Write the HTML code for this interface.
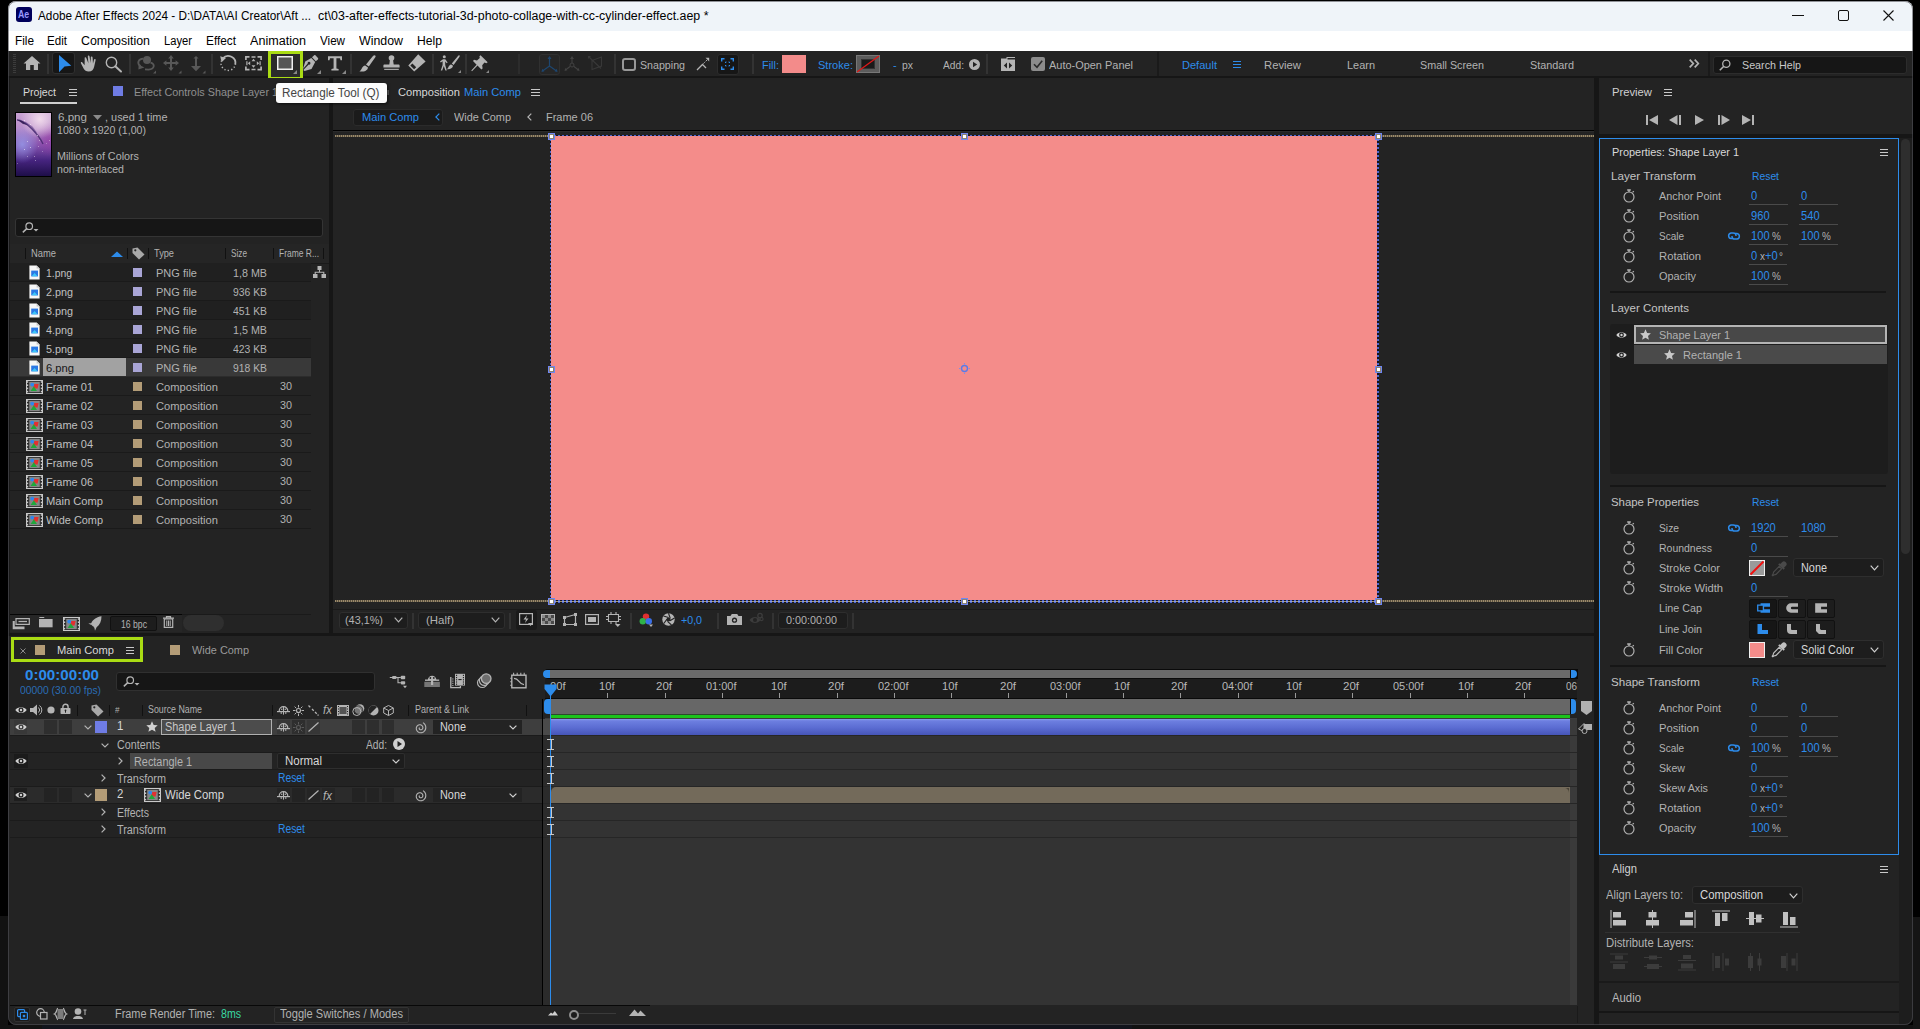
<!DOCTYPE html>
<html><head><meta charset="utf-8"><title>Adobe After Effects 2024</title>
<style>
html,body{margin:0;padding:0;background:#000;}
body{width:1920px;height:1029px;position:relative;overflow:hidden;font-family:"Liberation Sans",sans-serif;}
.a{position:absolute;box-sizing:border-box;}
svg.a{overflow:visible;}
.t{position:absolute;white-space:nowrap;transform-origin:0 50%;}
</style></head><body>
<div class="a" style="left:8px;top:1px;width:1905px;height:1024px;background:#232323;border-radius:8px;"></div>
<div class="a" style="left:8px;top:1px;width:1905px;height:30px;background:#eff4f9;border-radius:8px 8px 0 0;"></div>
<div class="a" style="left:16px;top:7px;width:16px;height:15px;background:#00005b;border-radius:3px;"></div>
<div class="t" style="left:18px;top:10px;font-size:10px;line-height:10px;color:#9999ff;font-weight:bold;transform:scaleX(0.8752);">Ae</div>
<div class="t" style="left:38px;top:10px;font-size:12.5px;line-height:12.5px;color:#000;transform:scaleX(0.9423);">Adobe After Effects 2024 - D:\DATA\AI Creator\Aft ...</div>
<div class="t" style="left:317.5px;top:10px;font-size:12.5px;line-height:12.5px;color:#000;transform:scaleX(0.9925);">ct\03-after-effects-tutorial-3d-photo-collage-with-cc-cylinder-effect.aep *</div>
<div class="a" style="left:1792px;top:15px;width:12px;height:1px;background:#111;"></div>
<div class="a" style="left:1838px;top:10px;width:11px;height:11px;border:1px solid #111;border-radius:2px;"></div>
<svg class="a" style="left:1883px;top:10px;" width="11" height="11" viewBox="0 0 11 11"><path d="M0.5 0.5L10.5 10.5M10.5 0.5L0.5 10.5" stroke="#111" stroke-width="1.1" fill="none"/></svg>
<div class="a" style="left:8px;top:31px;width:1905px;height:20px;background:#ffffff;"></div>
<div class="t" style="left:15px;top:35px;font-size:12px;line-height:12px;color:#000;transform:scaleX(0.9822);">File</div>
<div class="t" style="left:47px;top:35px;font-size:12px;line-height:12px;color:#000;transform:scaleX(0.9668);">Edit</div>
<div class="t" style="left:81px;top:35px;font-size:12px;line-height:12px;color:#000;transform:scaleX(1.0344);">Composition</div>
<div class="t" style="left:164px;top:35px;font-size:12px;line-height:12px;color:#000;transform:scaleX(0.9324);">Layer</div>
<div class="t" style="left:206px;top:35px;font-size:12px;line-height:12px;color:#000;transform:scaleX(0.9846);">Effect</div>
<div class="t" style="left:250px;top:35px;font-size:12px;line-height:12px;color:#000;transform:scaleX(1.0492);">Animation</div>
<div class="t" style="left:320px;top:35px;font-size:12px;line-height:12px;color:#000;transform:scaleX(0.9691);">View</div>
<div class="t" style="left:359px;top:35px;font-size:12px;line-height:12px;color:#000;transform:scaleX(1.0307);">Window</div>
<div class="t" style="left:417px;top:35px;font-size:12px;line-height:12px;color:#000;transform:scaleX(1.0127);">Help</div>
<div class="a" style="left:8px;top:51px;width:1905px;height:25px;background:#232323;"></div>
<div class="a" style="left:8px;top:76px;width:1905px;height:2px;background:#161616;"></div>
<div class="a" style="left:13px;top:54px;width:3px;height:1px;background:#3c3c3c;"></div>
<div class="a" style="left:13px;top:56px;width:3px;height:1px;background:#3c3c3c;"></div>
<div class="a" style="left:13px;top:58px;width:3px;height:1px;background:#3c3c3c;"></div>
<div class="a" style="left:13px;top:60px;width:3px;height:1px;background:#3c3c3c;"></div>
<div class="a" style="left:13px;top:62px;width:3px;height:1px;background:#3c3c3c;"></div>
<div class="a" style="left:13px;top:64px;width:3px;height:1px;background:#3c3c3c;"></div>
<div class="a" style="left:13px;top:66px;width:3px;height:1px;background:#3c3c3c;"></div>
<div class="a" style="left:13px;top:68px;width:3px;height:1px;background:#3c3c3c;"></div>
<div class="a" style="left:13px;top:70px;width:3px;height:1px;background:#3c3c3c;"></div>
<div class="a" style="left:13px;top:72px;width:3px;height:1px;background:#3c3c3c;"></div>
<svg class="a" style="left:23px;top:55px;" width="18" height="16" viewBox="0 0 18 16"><path d="M9 1L0.5 8.5H3V15H7.2V10H10.8V15H15V8.5H17.5Z" fill="#b4b4b4"/></svg>
<div class="a" style="left:47px;top:54px;width:2px;height:20px;background:#333;"></div>
<div class="a" style="left:52px;top:52px;width:23px;height:22px;background:#161616;border:1px solid #303030;border-radius:3px;"></div>
<svg class="a" style="left:59px;top:55px;" width="12" height="18" viewBox="0 0 12 18"><path d="M0 0L12.3 10.8L5.5 11.5L0 17.3Z" fill="#2d8ceb"/></svg>
<svg class="a" style="left:80px;top:55px;" width="18" height="17" viewBox="0 0 18 17"><path d="M4.6 10.2L2.4 7.4C1.6 6.4 0.4 7.2 0.9 8.3L3.6 13.6C4.6 15.6 6.2 16.6 8.6 16.6C12 16.6 13.6 14.6 14.2 11.6L15.6 5.2C15.9 3.9 14.3 3.5 14 4.8L13 8.6L12.6 2.4C12.5 1.1 10.8 1.2 10.8 2.5L10.7 8L9.5 1.3C9.3 0 7.6 0.3 7.8 1.6L8.4 8.2L6.3 2.9C5.8 1.7 4.3 2.3 4.7 3.5Z" fill="#b4b4b4"/></svg>
<svg class="a" style="left:105px;top:56px;" width="18" height="17" viewBox="0 0 18 17"><circle cx="6.5" cy="6.5" r="5.2" fill="none" stroke="#b4b4b4" stroke-width="1.4"/><path d="M10.3 10.3L16 15.5" stroke="#b4b4b4" stroke-width="2" stroke-linecap="round"/></svg>
<div class="a" style="left:129px;top:54px;width:2px;height:20px;background:#333;"></div>
<svg class="a" style="left:136px;top:55px;" width="21" height="19" viewBox="0 0 21 19"><circle cx="11" cy="5" r="4" fill="#585858"/><path d="M7.3 3.6C2 4 0.6 8.5 4.6 11.2" fill="none" stroke="#585858" stroke-width="1.8"/><path d="M2.6 9.6L8.4 12.6L2.4 14.6Z" fill="#585858"/><path d="M14.6 7.6C19.2 9 19 14 12.4 14.6L9 14.4" fill="none" stroke="#585858" stroke-width="1.8"/><path d="M20 18.5H17L20 15.5Z" fill="#585858"/></svg>
<svg class="a" style="left:163px;top:55px;" width="19" height="19" viewBox="0 0 19 19"><path d="M7 3H9V7H13V9H9V13H7V9H3V7H7Z" fill="#585858"/><path d="M8 0L10.8 3.4H5.2ZM8 16L10.8 12.600H5.2ZM0 8L3.4 5.2V10.8ZM16 8L12.600 5.200V10.800Z" fill="#585858"/><path d="M18.500 18.500H15.500L18.500 15.500Z" fill="#585858"/></svg>
<svg class="a" style="left:190px;top:56px;" width="16" height="18" viewBox="0 0 16 18"><path d="M6 0L8.6 2.600H7V10H11L6 15.300L1 10H5V2.600H3.400Z" fill="#585858"/><path d="M15.500 17.500H12.500L15.500 14.500Z" fill="#585858"/></svg>
<div class="a" style="left:211px;top:54px;width:2px;height:20px;background:#333;"></div>
<svg class="a" style="left:219px;top:55px;" width="19" height="17" viewBox="0 0 19 17"><path d="M3.85 3.38A7.2 7.2 0 0 1 16.24 9.70" fill="none" stroke="#b4b4b4" stroke-width="1.8"/><path d="M1.2 1.3L7 2.900L2.600 7.200Z" fill="#b4b4b4"/><path d="M15.56 11.58A7.2 7.2 0 0 1 2.43 5.74" fill="none" stroke="#b4b4b4" stroke-width="1.4" stroke-dasharray="1.3 2.1"/></svg>
<svg class="a" style="left:245px;top:56px;" width="17" height="15" viewBox="0 0 17 15"><path d="M0.9 4V0.900H4.500M12.500 0.900H16.100V4M16.100 10.500V13.600H12.500M4.500 13.600H0.900V10.500" fill="none" stroke="#b4b4b4" stroke-width="1.700"/><path d="M6.500 0.900H10.500M6.500 13.600H10.500" stroke="#b4b4b4" stroke-width="1.500"/><path d="M8.500 2.800L10.500 5.200H6.500ZM8.500 11.700L10.500 9.300H6.500ZM1.300 5.200H2.500V9.300H1.300ZM2.800 7.250L5.200 5.200V9.300ZM15.700 5.200H14.500V9.300H15.700ZM14.200 7.250L11.800 5.200V9.300Z" fill="#b4b4b4"/></svg>
<div class="a" style="left:271px;top:54px;width:29px;height:23px;background:#2b2b2b;"></div>
<div class="a" style="left:268px;top:51px;width:35px;height:29px;border:3px solid #aadc14;"></div>
<svg class="a" style="left:277px;top:56px;" width="16" height="14" viewBox="0 0 16 14"><rect x="0.75" y="0.75" width="14.5" height="12.5" fill="#555" stroke="#f0f0f0" stroke-width="1.5"/></svg>
<svg class="a" style="left:293px;top:70px;" width="4" height="4" viewBox="0 0 4 4"><path d="M4 0V4H0Z" fill="#888"/></svg>
<svg class="a" style="left:303px;top:55px;" width="16" height="17" viewBox="0 0 16 17"><path d="M9 2.2L11.2 0.3C11.7 -0.1 12.2 0 12.6 0.4L15 3C15.4 3.5 15.3 4 14.9 4.4L12.8 6.2Z M8.3 3L12.2 7L8.5 14L1.5 16L0.3 15L5.7 9.6A1.4 1.4 0 1 0 4.7 8.6L0 14L2.2 6.5Z" fill="#b4b4b4"/></svg>
<svg class="a" style="left:317px;top:70px;" width="4" height="4" viewBox="0 0 4 4"><path d="M4 0V4H0Z" fill="#888"/></svg>
<svg class="a" style="left:328px;top:56px;" width="14" height="15" viewBox="0 0 14 15"><path d="M0 0.300H14V4.200H12.500L12 2.300H8.400V12.500L10.600 13V14.600H3.400V13L5.600 12.500V2.300H2L1.500 4.200H0Z" fill="#b4b4b4"/></svg>
<svg class="a" style="left:342px;top:70px;" width="4" height="4" viewBox="0 0 4 4"><path d="M4 0V4H0Z" fill="#888"/></svg>
<div class="a" style="left:350px;top:54px;width:2px;height:20px;background:#333;"></div>
<svg class="a" style="left:359px;top:55px;" width="17" height="17" viewBox="0 0 17 17"><path d="M15.500 0.200C16.700 0.200 16.900 1.400 16.300 2.300L9.800 11.600L7 9.600L14 0.900C14.400 0.400 14.900 0.200 15.500 0.200Z M6.200 10.400L9 12.400C8.600 15.800 4.500 17 0.300 16.500C3 15 2.600 11 6.200 10.400Z" fill="#b4b4b4"/></svg>
<svg class="a" style="left:383px;top:55px;" width="17" height="16" viewBox="0 0 17 16"><circle cx="8.500" cy="3" r="2.800" fill="#b4b4b4"/><path d="M7 4.500L6.300 9.400H1.500C0.800 9.400 0.400 9.900 0.400 10.500V12.400H16.600V10.500C16.600 9.900 16.200 9.400 15.500 9.400H10.700L10 4.500Z" fill="#b4b4b4"/><rect x="1.200" y="13.800" width="14.600" height="1.100" fill="#b4b4b4"/></svg>
<svg class="a" style="left:408px;top:54px;" width="18" height="18" viewBox="0 0 18 18"><path d="M10.200 0.200L17.600 7.400L6.200 17.400L0.300 11.600ZM2.300 11.500L6.100 15.200L8.200 13.300L4.400 9.600Z" fill="#b4b4b4" fill-rule="evenodd"/></svg>
<div class="a" style="left:432px;top:54px;width:2px;height:20px;background:#333;"></div>
<svg class="a" style="left:439px;top:55px;" width="22" height="18" viewBox="0 0 22 18"><circle cx="5.3" cy="1.8" r="1.5" fill="#b4b4b4"/><path d="M1 6.5L4 4.2H6.3L8.6 7.5L7.8 8.3L6.2 6.6V10L7.8 15.5H6.4L4.8 11L3.2 15.5H1.8L3.6 10V6.2L1.8 7.6Z" fill="#b4b4b4"/><path d="M20.3 0.3C20.9 0.7 20.8 1.4 20.4 2L14.6 10L12.8 8.6L19 0.9C19.4 0.4 19.9 0 20.3 0.3ZM12.2 9.4L14 10.8C13.8 13.5 10.8 14.6 7.8 14.2C9.7 13 9.2 10.1 12.2 9.4Z" fill="#b4b4b4"/><path d="M22 18L19 18L22 15Z" fill="#888"/></svg>
<div class="a" style="left:465px;top:54px;width:2px;height:20px;background:#333;"></div>
<svg class="a" style="left:471px;top:55px;" width="18" height="18" viewBox="0 0 18 18"><path d="M9.5 0.3L16.7 7.2L15.3 8.2L13.5 7.6L11.2 10.2L11.6 13.4L10.4 14.4L6.5 10.6L1 16.2L0.3 15.6L5.6 9.8L2 6L3 4.8L6 5.4L8.8 3L8.4 1.2Z" fill="#b4b4b4"/><path d="M18 18L15 18L18 15Z" fill="#888"/></svg>
<div class="a" style="left:518px;top:54px;width:2px;height:20px;background:#2c2c2c;"></div>
<div class="a" style="left:539px;top:54px;width:21px;height:21px;background:#262626;border:1px solid #303030;border-radius:3px;"></div>
<svg class="a" style="left:541px;top:56px;" width="17" height="17" viewBox="0 0 17 17"><path d="M8.5 1V10M8.5 10L1.5 15M8.5 10L15.5 15" fill="none" stroke="#1d4670" stroke-width="1.2"/><path d="M8.5 0L10.5 3H6.5ZM0.5 16L1.2 12.8L3.4 15.2ZM16.5 16L15.8 12.8L13.6 15.2Z" fill="#1d4670"/></svg>
<svg class="a" style="left:564px;top:56px;" width="16" height="16" viewBox="0 0 16 16"><path d="M8 1V7M6 10.5L1.5 14M10 10.5L14.5 14" fill="none" stroke="#424242" stroke-width="1.1"/><circle cx="8" cy="9" r="2" fill="none" stroke="#424242"/><path d="M8 0L10 3H6ZM0.5 15L1.2 12L3.4 14.2ZM15.5 15L14.8 12L12.6 14.2Z" fill="#424242"/></svg>
<svg class="a" style="left:587px;top:55px;" width="16" height="16" viewBox="0 0 16 16"><path d="M5 5.5L14.5 2V11L5 14.5ZM2 2L14 13.5" fill="none" stroke="#383838" stroke-width="1.1"/><path d="M1 1H4L1 4Z" fill="#383838"/></svg>
<div class="a" style="left:614px;top:54px;width:2px;height:20px;background:#333;"></div>
<div class="a" style="left:622px;top:58px;width:14px;height:13px;border:2px solid #989898;border-radius:3px;"></div>
<div class="t" style="left:640px;top:60px;font-size:11.5px;line-height:11.5px;color:#b2b2b2;transform:scaleX(0.9257);">Snapping</div>
<svg class="a" style="left:696px;top:57px;" width="14" height="14" viewBox="0 0 14 14"><path d="M1 13L6.5 7.5L10 11" fill="none" stroke="#b4b4b4" stroke-width="1.3"/><path d="M6.5 7.5L11 3" stroke="#b4b4b4" stroke-width="1" stroke-dasharray="1.5 1" fill="none"/><path d="M9.5 0.8H13.2V4.5Z" fill="#b4b4b4"/></svg>
<div class="a" style="left:717px;top:54px;width:22px;height:21px;background:#161616;border:1px solid #2c2c2c;border-radius:3px;"></div>
<svg class="a" style="left:721px;top:58px;" width="13" height="12" viewBox="0 0 13 12"><path d="M0.7 3.5V0.7H3.5M9.5 0.7H12.3V3.5M12.3 8.5V11.3H9.5M3.5 11.3H0.7V8.5" fill="none" stroke="#2d8ceb" stroke-width="1.4"/><path d="M4.5 5V4H5.5M7.5 4H8.5V5M8.5 7V8H7.5M5.5 8H4.5V7" fill="none" stroke="#2d8ceb" stroke-width="1"/></svg>
<div class="a" style="left:752px;top:54px;width:2px;height:20px;background:#333;"></div>
<div class="t" style="left:762px;top:60px;font-size:11.5px;line-height:11.5px;color:#2d8ceb;transform:scaleX(0.9502);">Fill:</div>
<div class="a" style="left:782px;top:55px;width:24px;height:18px;background:#f38b8a;"></div>
<div class="t" style="left:818px;top:60px;font-size:11.5px;line-height:11.5px;color:#2d8ceb;transform:scaleX(0.9605);">Stroke:</div>
<div class="a" style="left:856px;top:55px;width:24px;height:18px;background:#5c5c5c;border:1px solid #777;"></div>
<div class="a" style="left:861px;top:59px;width:14px;height:10px;background:#1a1a1a;border:1px solid #333;"></div>
<svg class="a" style="left:856px;top:55px;" width="24" height="18" viewBox="0 0 24 18"><path d="M1 17L23 1" stroke="#e01818" stroke-width="1.3"/></svg>
<div class="t" style="left:893px;top:60px;font-size:11.5px;line-height:11.5px;color:#2d8ceb;transform:scaleX(0.95);">-</div>
<div class="t" style="left:902px;top:60px;font-size:11.5px;line-height:11.5px;color:#b2b2b2;transform:scaleX(0.9049);">px</div>
<div class="t" style="left:943px;top:60px;font-size:11.5px;line-height:11.5px;color:#b2b2b2;transform:scaleX(0.8871);">Add:</div>
<svg class="a" style="left:969px;top:59px;" width="11" height="11" viewBox="0 0 11 11"><circle cx="5.5" cy="5.5" r="5.5" fill="#b4b4b4"/><path d="M4 2.8L8.2 5.5L4 8.2Z" fill="#232323"/></svg>
<div class="a" style="left:986px;top:54px;width:2px;height:20px;background:#333;"></div>
<svg class="a" style="left:1001px;top:57px;" width="14" height="14" viewBox="0 0 14 14"><path d="M0 1.5H5.5V0H14V1H6.5V2.5H14V14H0Z" fill="#b4b4b4"/><path d="M6 5.5V11.5L2.8 8.5ZM8 5.5V11.5L11.2 8.5Z" fill="#232323"/></svg>
<div class="a" style="left:1031px;top:57px;width:14px;height:14px;background:#8c8c8c;border-radius:2px;"></div>
<svg class="a" style="left:1031px;top:57px;" width="14" height="14" viewBox="0 0 14 14"><path d="M3 7.2L6 10.2L11.2 3.8" fill="none" stroke="#2a2a2a" stroke-width="1.6"/></svg>
<div class="t" style="left:1049px;top:60px;font-size:11.5px;line-height:11.5px;color:#b2b2b2;transform:scaleX(0.9520);">Auto-Open Panel</div>
<div class="a" style="left:1157px;top:52px;width:2px;height:24px;background:#1a1a1a;"></div>
<div class="t" style="left:1182px;top:60px;font-size:11.5px;line-height:11.5px;color:#2d8ceb;transform:scaleX(0.9605);">Default</div>
<div class="a" style="left:1233px;top:61px;width:8px;height:1.3px;background:#2d8ceb;"></div>
<div class="a" style="left:1233px;top:64px;width:8px;height:1.3px;background:#2d8ceb;"></div>
<div class="a" style="left:1233px;top:67px;width:8px;height:1.3px;background:#2d8ceb;"></div>
<div class="t" style="left:1264px;top:60px;font-size:11.5px;line-height:11.5px;color:#b2b2b2;transform:scaleX(0.9809);">Review</div>
<div class="t" style="left:1347px;top:60px;font-size:11.5px;line-height:11.5px;color:#b2b2b2;transform:scaleX(0.9517);">Learn</div>
<div class="t" style="left:1420px;top:60px;font-size:11.5px;line-height:11.5px;color:#b2b2b2;transform:scaleX(0.9358);">Small Screen</div>
<div class="t" style="left:1530px;top:60px;font-size:11.5px;line-height:11.5px;color:#b2b2b2;transform:scaleX(0.9424);">Standard</div>
<svg class="a" style="left:1689px;top:59px;" width="10" height="9" viewBox="0 0 10 9"><path d="M0.7 0.7L4.3 4.5L0.7 8.3M5.7 0.7L9.3 4.5L5.7 8.3" fill="none" stroke="#b4b4b4" stroke-width="1.7"/></svg>
<div class="a" style="left:1708px;top:52px;width:2px;height:24px;background:#1a1a1a;"></div>
<div class="a" style="left:1713px;top:56px;width:194px;height:18px;background:#161616;border-radius:3px;border:1px solid #2c2c2c;"></div>
<svg class="a" style="left:1719px;top:59px;" width="12" height="12" viewBox="0 0 12 12"><circle cx="7.3" cy="4.7" r="3.6" fill="none" stroke="#b4b4b4" stroke-width="1.3"/><path d="M4.8 7.2L0.8 11.2" stroke="#b4b4b4" stroke-width="1.6"/></svg>
<div class="t" style="left:1742px;top:60px;font-size:11.5px;line-height:11.5px;color:#c8c8c8;transform:scaleX(0.9321);">Search Help</div>
<div class="a" style="left:8px;top:78px;width:321px;height:559px;background:#232323;"></div>
<div class="a" style="left:329px;top:78px;width:4px;height:559px;background:#161616;"></div>
<div class="a" style="left:8px;top:78px;width:2px;height:559px;background:#1a1a1a;"></div>
<div class="t" style="left:23px;top:87px;font-size:11.5px;line-height:11.5px;color:#d8d8d8;transform:scaleX(0.9219);">Project</div>
<div class="a" style="left:20px;top:102px;width:57px;height:2px;background:#cfcfcf;"></div>
<div class="a" style="left:69px;top:89px;width:8px;height:1px;background:#c8c8c8;"></div>
<div class="a" style="left:69px;top:92px;width:8px;height:1px;background:#c8c8c8;"></div>
<div class="a" style="left:69px;top:95px;width:8px;height:1px;background:#c8c8c8;"></div>
<div class="a" style="left:113px;top:86px;width:10px;height:10px;background:#6f7ce4;"></div>
<div class="t" style="left:134px;top:87px;font-size:11.5px;line-height:11.5px;color:#8f8f8f;transform:scaleX(0.9398);">Effect Controls Shape Layer 1</div>
<div class="a" style="left:15px;top:112px;width:37px;height:65px;background:#000;"></div>
<div class="a" style="left:16px;top:113px;width:35px;height:63px;background:radial-gradient(ellipse 55% 30% at 68% 10%,rgba(245,225,238,.9),rgba(245,225,238,0) 100%),radial-gradient(ellipse 45% 30% at 18% 50%,rgba(150,155,235,.8),rgba(150,155,235,0) 100%),radial-gradient(ellipse 40% 28% at 95% 42%,rgba(150,50,160,.55),rgba(150,50,160,0) 100%),linear-gradient(180deg,#c9a3d3 0%,#b78bc9 25%,#8452ad 52%,#46247f 75%,#1e0e48 100%);"></div>
<svg class="a" style="left:16px;top:113px;" width="35" height="63" viewBox="0 0 35 63"><path d="M1 7C6 7 12 12 16 16C20 20 24 24 27 31" stroke="#3b2166" stroke-width="1.4" fill="none" opacity=".75"/><path d="M1 6.500L6 8L12 12L7 11Z" fill="#2c1650" opacity=".85"/><path d="M9 9.500L16 14.500L20 20" stroke="#4a2a78" stroke-width="2" fill="none" opacity=".5"/><rect x="8" y="7" width="1" height="1" fill="#fff" opacity="0.54"/><rect x="14" y="11" width="1" height="1" fill="#fff" opacity="0.48"/><rect x="21" y="22" width="1" height="1" fill="#fff" opacity="0.54"/><rect x="23" y="27" width="1" height="1" fill="#fff" opacity="0.42"/><rect x="11" y="28" width="1" height="1" fill="#fff" opacity="0.48"/><rect x="14" y="34" width="1" height="1" fill="#fff" opacity="0.54"/><rect x="8" y="36" width="1" height="1" fill="#fff" opacity="0.54"/><rect x="22" y="33" width="1" height="1" fill="#fff" opacity="0.36"/><rect x="18" y="43" width="1" height="1" fill="#fff" opacity="0.42"/><rect x="11" y="43" width="1" height="1" fill="#fff" opacity="0.36"/><rect x="19" y="47" width="1" height="1" fill="#fff" opacity="0.42"/><rect x="33" y="27" width="1" height="1" fill="#fff" opacity="0.36"/><rect x="30" y="30" width="1" height="1" fill="#fff" opacity="0.30"/><rect x="1" y="50" width="1" height="1" fill="#fff" opacity="0.30"/><rect x="26" y="38" width="1" height="1" fill="#fff" opacity="0.30"/></svg>
<div class="t" style="left:58px;top:112px;font-size:11.5px;line-height:11.5px;color:#b2b2b2;transform:scaleX(1.0076);">6.png</div>
<svg class="a" style="left:93px;top:115px;" width="9" height="5" viewBox="0 0 9 5"><path d="M0 0H9L4.500 5Z" fill="#8a8a8a"/></svg>
<div class="t" style="left:105px;top:112px;font-size:11.5px;line-height:11.5px;color:#b2b2b2;transform:scaleX(0.9492);">, used 1 time</div>
<div class="t" style="left:57px;top:125px;font-size:11.5px;line-height:11.5px;color:#b2b2b2;transform:scaleX(0.9218);">1080 x 1920 (1,00)</div>
<div class="t" style="left:57px;top:151px;font-size:11.5px;line-height:11.5px;color:#b2b2b2;transform:scaleX(0.9365);">Millions of Colors</div>
<div class="t" style="left:57px;top:164px;font-size:11.5px;line-height:11.5px;color:#b2b2b2;transform:scaleX(0.9192);">non-interlaced</div>
<div class="a" style="left:15px;top:218px;width:308px;height:19px;background:#161616;border-radius:3px;border:1px solid #343434;"></div>
<svg class="a" style="left:22px;top:222px;" width="17" height="11" viewBox="0 0 17 11"><circle cx="7.2" cy="4.2" r="3.3" fill="none" stroke="#b4b4b4" stroke-width="1.2"/><path d="M4.8 6.6L0.8 10.4" stroke="#b4b4b4" stroke-width="1.5"/><path d="M11.5 7H16.5L14 9.6Z" fill="#b4b4b4"/></svg>
<div class="a" style="left:10px;top:244px;width:319px;height:19px;background:#252525;"></div>
<div class="a" style="left:10px;top:263px;width:319px;height:1px;background:#1a1a1a;"></div>
<div class="a" style="left:25px;top:248px;width:1px;height:11px;background:#111;"></div>
<div class="a" style="left:127px;top:248px;width:1px;height:11px;background:#111;"></div>
<div class="a" style="left:148px;top:248px;width:1px;height:11px;background:#111;"></div>
<div class="a" style="left:225px;top:248px;width:1px;height:11px;background:#111;"></div>
<div class="a" style="left:273px;top:248px;width:1px;height:11px;background:#111;"></div>
<div class="a" style="left:323px;top:248px;width:1px;height:11px;background:#111;"></div>
<div class="t" style="left:31px;top:248px;font-size:10.5px;line-height:10.5px;color:#b2b2b2;transform:scaleX(0.8924);">Name</div>
<svg class="a" style="left:111px;top:251px;" width="12" height="6" viewBox="0 0 12 6"><path d="M0 6L6 0.5L12 6Z" fill="#2d8ceb"/></svg>
<svg class="a" style="left:132px;top:247px;" width="13" height="13" viewBox="0 0 13 13"><path d="M0.5 1.5L5.5 0.5L12.5 7.5L7 12.5L0.5 6Z" fill="#a8a8a8"/><circle cx="3.3" cy="3.3" r="1.1" fill="#262626"/></svg>
<div class="t" style="left:154px;top:248px;font-size:10.5px;line-height:10.5px;color:#b2b2b2;transform:scaleX(0.8785);">Type</div>
<div class="t" style="left:231px;top:248px;font-size:10.5px;line-height:10.5px;color:#b2b2b2;transform:scaleX(0.7829);">Size</div>
<div class="t" style="left:279px;top:248px;font-size:10.5px;line-height:10.5px;color:#b2b2b2;transform:scaleX(0.8066);">Frame R...</div>
<div class="a" style="left:10px;top:263px;width:301px;height:18px;background:#202020;"></div>
<div class="a" style="left:10px;top:281px;width:301px;height:1px;background:#1a1a1a;"></div>
<svg class="a" style="left:29px;top:265px;" width="11" height="15" viewBox="0 0 11 15"><path d="M0.400 0.400H7.600L10.600 3.600V14.600H0.400Z" fill="#f6f6f6"/><path d="M7.600 0.400V3.600H10.600Z" fill="#c4c4c4"/><rect x="2.200" y="5.600" width="6.800" height="5.800" fill="#2a78e4"/><path d="M2.600 11.200L5.600 8L8.600 11.200Z" fill="#3cc6f8"/></svg>
<div class="t" style="left:46px;top:268px;font-size:11.5px;line-height:11.5px;color:#c0c0c0;transform:scaleX(0.9034);">1.png</div>
<div class="a" style="left:133px;top:268px;width:9px;height:9px;background:#a9a5d6;"></div>
<div class="t" style="left:156px;top:268px;font-size:11.5px;line-height:11.5px;color:#b2b2b2;transform:scaleX(0.9573);">PNG file</div>
<div class="t" style="left:233px;top:268px;font-size:11.5px;line-height:11.5px;color:#b2b2b2;transform:scaleX(0.9331);">1,8 MB</div>
<div class="a" style="left:10px;top:282px;width:301px;height:18px;background:#232323;"></div>
<div class="a" style="left:10px;top:300px;width:301px;height:1px;background:#1a1a1a;"></div>
<svg class="a" style="left:29px;top:284px;" width="11" height="15" viewBox="0 0 11 15"><path d="M0.400 0.400H7.600L10.600 3.600V14.600H0.400Z" fill="#f6f6f6"/><path d="M7.600 0.400V3.600H10.600Z" fill="#c4c4c4"/><rect x="2.200" y="5.600" width="6.800" height="5.800" fill="#2a78e4"/><path d="M2.600 11.200L5.600 8L8.600 11.200Z" fill="#3cc6f8"/></svg>
<div class="t" style="left:46px;top:287px;font-size:11.5px;line-height:11.5px;color:#c0c0c0;transform:scaleX(0.9381);">2.png</div>
<div class="a" style="left:133px;top:287px;width:9px;height:9px;background:#a9a5d6;"></div>
<div class="t" style="left:156px;top:287px;font-size:11.5px;line-height:11.5px;color:#b2b2b2;transform:scaleX(0.9573);">PNG file</div>
<div class="t" style="left:233px;top:287px;font-size:11.5px;line-height:11.5px;color:#b2b2b2;transform:scaleX(0.9010);">936 KB</div>
<div class="a" style="left:10px;top:301px;width:301px;height:18px;background:#202020;"></div>
<div class="a" style="left:10px;top:319px;width:301px;height:1px;background:#1a1a1a;"></div>
<svg class="a" style="left:29px;top:303px;" width="11" height="15" viewBox="0 0 11 15"><path d="M0.400 0.400H7.600L10.600 3.600V14.600H0.400Z" fill="#f6f6f6"/><path d="M7.600 0.400V3.600H10.600Z" fill="#c4c4c4"/><rect x="2.200" y="5.600" width="6.800" height="5.800" fill="#2a78e4"/><path d="M2.600 11.200L5.600 8L8.600 11.200Z" fill="#3cc6f8"/></svg>
<div class="t" style="left:46px;top:306px;font-size:11.5px;line-height:11.5px;color:#c0c0c0;transform:scaleX(0.9381);">3.png</div>
<div class="a" style="left:133px;top:306px;width:9px;height:9px;background:#a9a5d6;"></div>
<div class="t" style="left:156px;top:306px;font-size:11.5px;line-height:11.5px;color:#b2b2b2;transform:scaleX(0.9573);">PNG file</div>
<div class="t" style="left:233px;top:306px;font-size:11.5px;line-height:11.5px;color:#b2b2b2;transform:scaleX(0.9010);">451 KB</div>
<div class="a" style="left:10px;top:320px;width:301px;height:18px;background:#232323;"></div>
<div class="a" style="left:10px;top:338px;width:301px;height:1px;background:#1a1a1a;"></div>
<svg class="a" style="left:29px;top:322px;" width="11" height="15" viewBox="0 0 11 15"><path d="M0.400 0.400H7.600L10.600 3.600V14.600H0.400Z" fill="#f6f6f6"/><path d="M7.600 0.400V3.600H10.600Z" fill="#c4c4c4"/><rect x="2.200" y="5.600" width="6.800" height="5.800" fill="#2a78e4"/><path d="M2.600 11.200L5.600 8L8.600 11.200Z" fill="#3cc6f8"/></svg>
<div class="t" style="left:46px;top:325px;font-size:11.5px;line-height:11.5px;color:#c0c0c0;transform:scaleX(0.9381);">4.png</div>
<div class="a" style="left:133px;top:325px;width:9px;height:9px;background:#a9a5d6;"></div>
<div class="t" style="left:156px;top:325px;font-size:11.5px;line-height:11.5px;color:#b2b2b2;transform:scaleX(0.9573);">PNG file</div>
<div class="t" style="left:233px;top:325px;font-size:11.5px;line-height:11.5px;color:#b2b2b2;transform:scaleX(0.9331);">1,5 MB</div>
<div class="a" style="left:10px;top:339px;width:301px;height:18px;background:#202020;"></div>
<div class="a" style="left:10px;top:357px;width:301px;height:1px;background:#1a1a1a;"></div>
<svg class="a" style="left:29px;top:341px;" width="11" height="15" viewBox="0 0 11 15"><path d="M0.400 0.400H7.600L10.600 3.600V14.600H0.400Z" fill="#f6f6f6"/><path d="M7.600 0.400V3.600H10.600Z" fill="#c4c4c4"/><rect x="2.200" y="5.600" width="6.800" height="5.800" fill="#2a78e4"/><path d="M2.600 11.200L5.600 8L8.600 11.200Z" fill="#3cc6f8"/></svg>
<div class="t" style="left:46px;top:344px;font-size:11.5px;line-height:11.5px;color:#c0c0c0;transform:scaleX(0.9381);">5.png</div>
<div class="a" style="left:133px;top:344px;width:9px;height:9px;background:#a9a5d6;"></div>
<div class="t" style="left:156px;top:344px;font-size:11.5px;line-height:11.5px;color:#b2b2b2;transform:scaleX(0.9573);">PNG file</div>
<div class="t" style="left:233px;top:344px;font-size:11.5px;line-height:11.5px;color:#b2b2b2;transform:scaleX(0.9010);">423 KB</div>
<div class="a" style="left:10px;top:358px;width:301px;height:18px;background:#393939;"></div>
<div class="a" style="left:10px;top:376px;width:301px;height:1px;background:#2c2c2c;"></div>
<svg class="a" style="left:29px;top:360px;" width="11" height="15" viewBox="0 0 11 15"><path d="M0.400 0.400H7.600L10.600 3.600V14.600H0.400Z" fill="#f6f6f6"/><path d="M7.600 0.400V3.600H10.600Z" fill="#c4c4c4"/><rect x="2.200" y="5.600" width="6.800" height="5.800" fill="#2a78e4"/><path d="M2.600 11.200L5.600 8L8.600 11.200Z" fill="#3cc6f8"/></svg>
<div class="a" style="left:43px;top:358px;width:83px;height:18px;background:#a2a2a2;"></div>
<div class="t" style="left:46px;top:363px;font-size:11.5px;line-height:11.5px;color:#161616;transform:scaleX(0.9729);">6.png</div>
<div class="a" style="left:133px;top:363px;width:9px;height:9px;background:#a9a5d6;"></div>
<div class="t" style="left:156px;top:363px;font-size:11.5px;line-height:11.5px;color:#b2b2b2;transform:scaleX(0.9573);">PNG file</div>
<div class="t" style="left:233px;top:363px;font-size:11.5px;line-height:11.5px;color:#b2b2b2;transform:scaleX(0.9010);">918 KB</div>
<div class="a" style="left:10px;top:377px;width:301px;height:18px;background:#232323;"></div>
<div class="a" style="left:10px;top:395px;width:301px;height:1px;background:#1a1a1a;"></div>
<svg class="a" style="left:26px;top:380px;" width="17" height="14" viewBox="0 0 17 14"><rect x="0.5" y="0.5" width="16" height="13" fill="#2a2a2a" stroke="#c8c8c8" stroke-width="1"/><rect x="0" y="1.2" width="2.2" height="1.6" fill="#c8c8c8"/><rect x="14.8" y="1.2" width="2.2" height="1.6" fill="#c8c8c8"/><rect x="0" y="4.4" width="2.2" height="1.6" fill="#c8c8c8"/><rect x="14.8" y="4.4" width="2.2" height="1.6" fill="#c8c8c8"/><rect x="0" y="7.6000000000000005" width="2.2" height="1.6" fill="#c8c8c8"/><rect x="14.8" y="7.6000000000000005" width="2.2" height="1.6" fill="#c8c8c8"/><rect x="0" y="10.8" width="2.2" height="1.6" fill="#c8c8c8"/><rect x="14.8" y="10.8" width="2.2" height="1.6" fill="#c8c8c8"/><rect x="3.2" y="1.8" width="10.6" height="10.4" fill="#868686"/><path d="M8.2 4H12.6L11.6 8.4H7.2Z" fill="#e23030"/><path d="M4.6 11L7.8 6.2L11 11Z" fill="#1fa83a"/><circle cx="6.2" cy="4.6" r="1.9" fill="#2f86ee"/></svg>
<div class="t" style="left:46px;top:382px;font-size:11.5px;line-height:11.5px;color:#c0c0c0;transform:scaleX(0.9549);">Frame 01</div>
<div class="a" style="left:133px;top:382px;width:9px;height:9px;background:#b39c77;"></div>
<div class="t" style="left:156px;top:382px;font-size:11.5px;line-height:11.5px;color:#b2b2b2;transform:scaleX(0.9699);">Composition</div>
<div class="t" style="left:280px;top:381px;font-size:11.5px;line-height:11.5px;color:#b2b2b2;transform:scaleX(0.9377);">30</div>
<div class="a" style="left:10px;top:396px;width:301px;height:18px;background:#232323;"></div>
<div class="a" style="left:10px;top:414px;width:301px;height:1px;background:#1a1a1a;"></div>
<svg class="a" style="left:26px;top:399px;" width="17" height="14" viewBox="0 0 17 14"><rect x="0.5" y="0.5" width="16" height="13" fill="#2a2a2a" stroke="#c8c8c8" stroke-width="1"/><rect x="0" y="1.2" width="2.2" height="1.6" fill="#c8c8c8"/><rect x="14.8" y="1.2" width="2.2" height="1.6" fill="#c8c8c8"/><rect x="0" y="4.4" width="2.2" height="1.6" fill="#c8c8c8"/><rect x="14.8" y="4.4" width="2.2" height="1.6" fill="#c8c8c8"/><rect x="0" y="7.6000000000000005" width="2.2" height="1.6" fill="#c8c8c8"/><rect x="14.8" y="7.6000000000000005" width="2.2" height="1.6" fill="#c8c8c8"/><rect x="0" y="10.8" width="2.2" height="1.6" fill="#c8c8c8"/><rect x="14.8" y="10.8" width="2.2" height="1.6" fill="#c8c8c8"/><rect x="3.2" y="1.8" width="10.6" height="10.4" fill="#868686"/><path d="M8.2 4H12.6L11.6 8.4H7.2Z" fill="#e23030"/><path d="M4.6 11L7.8 6.2L11 11Z" fill="#1fa83a"/><circle cx="6.2" cy="4.6" r="1.9" fill="#2f86ee"/></svg>
<div class="t" style="left:46px;top:401px;font-size:11.5px;line-height:11.5px;color:#c0c0c0;transform:scaleX(0.9549);">Frame 02</div>
<div class="a" style="left:133px;top:401px;width:9px;height:9px;background:#b39c77;"></div>
<div class="t" style="left:156px;top:401px;font-size:11.5px;line-height:11.5px;color:#b2b2b2;transform:scaleX(0.9699);">Composition</div>
<div class="t" style="left:280px;top:400px;font-size:11.5px;line-height:11.5px;color:#b2b2b2;transform:scaleX(0.9377);">30</div>
<div class="a" style="left:10px;top:415px;width:301px;height:18px;background:#232323;"></div>
<div class="a" style="left:10px;top:433px;width:301px;height:1px;background:#1a1a1a;"></div>
<svg class="a" style="left:26px;top:418px;" width="17" height="14" viewBox="0 0 17 14"><rect x="0.5" y="0.5" width="16" height="13" fill="#2a2a2a" stroke="#c8c8c8" stroke-width="1"/><rect x="0" y="1.2" width="2.2" height="1.6" fill="#c8c8c8"/><rect x="14.8" y="1.2" width="2.2" height="1.6" fill="#c8c8c8"/><rect x="0" y="4.4" width="2.2" height="1.6" fill="#c8c8c8"/><rect x="14.8" y="4.4" width="2.2" height="1.6" fill="#c8c8c8"/><rect x="0" y="7.6000000000000005" width="2.2" height="1.6" fill="#c8c8c8"/><rect x="14.8" y="7.6000000000000005" width="2.2" height="1.6" fill="#c8c8c8"/><rect x="0" y="10.8" width="2.2" height="1.6" fill="#c8c8c8"/><rect x="14.8" y="10.8" width="2.2" height="1.6" fill="#c8c8c8"/><rect x="3.2" y="1.8" width="10.6" height="10.4" fill="#868686"/><path d="M8.2 4H12.6L11.6 8.4H7.2Z" fill="#e23030"/><path d="M4.6 11L7.8 6.2L11 11Z" fill="#1fa83a"/><circle cx="6.2" cy="4.6" r="1.9" fill="#2f86ee"/></svg>
<div class="t" style="left:46px;top:420px;font-size:11.5px;line-height:11.5px;color:#c0c0c0;transform:scaleX(0.9549);">Frame 03</div>
<div class="a" style="left:133px;top:420px;width:9px;height:9px;background:#b39c77;"></div>
<div class="t" style="left:156px;top:420px;font-size:11.5px;line-height:11.5px;color:#b2b2b2;transform:scaleX(0.9699);">Composition</div>
<div class="t" style="left:280px;top:419px;font-size:11.5px;line-height:11.5px;color:#b2b2b2;transform:scaleX(0.9377);">30</div>
<div class="a" style="left:10px;top:434px;width:301px;height:18px;background:#232323;"></div>
<div class="a" style="left:10px;top:452px;width:301px;height:1px;background:#1a1a1a;"></div>
<svg class="a" style="left:26px;top:437px;" width="17" height="14" viewBox="0 0 17 14"><rect x="0.5" y="0.5" width="16" height="13" fill="#2a2a2a" stroke="#c8c8c8" stroke-width="1"/><rect x="0" y="1.2" width="2.2" height="1.6" fill="#c8c8c8"/><rect x="14.8" y="1.2" width="2.2" height="1.6" fill="#c8c8c8"/><rect x="0" y="4.4" width="2.2" height="1.6" fill="#c8c8c8"/><rect x="14.8" y="4.4" width="2.2" height="1.6" fill="#c8c8c8"/><rect x="0" y="7.6000000000000005" width="2.2" height="1.6" fill="#c8c8c8"/><rect x="14.8" y="7.6000000000000005" width="2.2" height="1.6" fill="#c8c8c8"/><rect x="0" y="10.8" width="2.2" height="1.6" fill="#c8c8c8"/><rect x="14.8" y="10.8" width="2.2" height="1.6" fill="#c8c8c8"/><rect x="3.2" y="1.8" width="10.6" height="10.4" fill="#868686"/><path d="M8.2 4H12.6L11.6 8.4H7.2Z" fill="#e23030"/><path d="M4.6 11L7.8 6.2L11 11Z" fill="#1fa83a"/><circle cx="6.2" cy="4.6" r="1.9" fill="#2f86ee"/></svg>
<div class="t" style="left:46px;top:439px;font-size:11.5px;line-height:11.5px;color:#c0c0c0;transform:scaleX(0.9549);">Frame 04</div>
<div class="a" style="left:133px;top:439px;width:9px;height:9px;background:#b39c77;"></div>
<div class="t" style="left:156px;top:439px;font-size:11.5px;line-height:11.5px;color:#b2b2b2;transform:scaleX(0.9699);">Composition</div>
<div class="t" style="left:280px;top:438px;font-size:11.5px;line-height:11.5px;color:#b2b2b2;transform:scaleX(0.9377);">30</div>
<div class="a" style="left:10px;top:453px;width:301px;height:18px;background:#232323;"></div>
<div class="a" style="left:10px;top:471px;width:301px;height:1px;background:#1a1a1a;"></div>
<svg class="a" style="left:26px;top:456px;" width="17" height="14" viewBox="0 0 17 14"><rect x="0.5" y="0.5" width="16" height="13" fill="#2a2a2a" stroke="#c8c8c8" stroke-width="1"/><rect x="0" y="1.2" width="2.2" height="1.6" fill="#c8c8c8"/><rect x="14.8" y="1.2" width="2.2" height="1.6" fill="#c8c8c8"/><rect x="0" y="4.4" width="2.2" height="1.6" fill="#c8c8c8"/><rect x="14.8" y="4.4" width="2.2" height="1.6" fill="#c8c8c8"/><rect x="0" y="7.6000000000000005" width="2.2" height="1.6" fill="#c8c8c8"/><rect x="14.8" y="7.6000000000000005" width="2.2" height="1.6" fill="#c8c8c8"/><rect x="0" y="10.8" width="2.2" height="1.6" fill="#c8c8c8"/><rect x="14.8" y="10.8" width="2.2" height="1.6" fill="#c8c8c8"/><rect x="3.2" y="1.8" width="10.6" height="10.4" fill="#868686"/><path d="M8.2 4H12.6L11.6 8.4H7.2Z" fill="#e23030"/><path d="M4.6 11L7.8 6.2L11 11Z" fill="#1fa83a"/><circle cx="6.2" cy="4.6" r="1.9" fill="#2f86ee"/></svg>
<div class="t" style="left:46px;top:458px;font-size:11.5px;line-height:11.5px;color:#c0c0c0;transform:scaleX(0.9549);">Frame 05</div>
<div class="a" style="left:133px;top:458px;width:9px;height:9px;background:#b39c77;"></div>
<div class="t" style="left:156px;top:458px;font-size:11.5px;line-height:11.5px;color:#b2b2b2;transform:scaleX(0.9699);">Composition</div>
<div class="t" style="left:280px;top:457px;font-size:11.5px;line-height:11.5px;color:#b2b2b2;transform:scaleX(0.9377);">30</div>
<div class="a" style="left:10px;top:472px;width:301px;height:18px;background:#232323;"></div>
<div class="a" style="left:10px;top:490px;width:301px;height:1px;background:#1a1a1a;"></div>
<svg class="a" style="left:26px;top:475px;" width="17" height="14" viewBox="0 0 17 14"><rect x="0.5" y="0.5" width="16" height="13" fill="#2a2a2a" stroke="#c8c8c8" stroke-width="1"/><rect x="0" y="1.2" width="2.2" height="1.6" fill="#c8c8c8"/><rect x="14.8" y="1.2" width="2.2" height="1.6" fill="#c8c8c8"/><rect x="0" y="4.4" width="2.2" height="1.6" fill="#c8c8c8"/><rect x="14.8" y="4.4" width="2.2" height="1.6" fill="#c8c8c8"/><rect x="0" y="7.6000000000000005" width="2.2" height="1.6" fill="#c8c8c8"/><rect x="14.8" y="7.6000000000000005" width="2.2" height="1.6" fill="#c8c8c8"/><rect x="0" y="10.8" width="2.2" height="1.6" fill="#c8c8c8"/><rect x="14.8" y="10.8" width="2.2" height="1.6" fill="#c8c8c8"/><rect x="3.2" y="1.8" width="10.6" height="10.4" fill="#868686"/><path d="M8.2 4H12.6L11.6 8.4H7.2Z" fill="#e23030"/><path d="M4.6 11L7.8 6.2L11 11Z" fill="#1fa83a"/><circle cx="6.2" cy="4.6" r="1.9" fill="#2f86ee"/></svg>
<div class="t" style="left:46px;top:477px;font-size:11.5px;line-height:11.5px;color:#c0c0c0;transform:scaleX(0.9549);">Frame 06</div>
<div class="a" style="left:133px;top:477px;width:9px;height:9px;background:#b39c77;"></div>
<div class="t" style="left:156px;top:477px;font-size:11.5px;line-height:11.5px;color:#b2b2b2;transform:scaleX(0.9699);">Composition</div>
<div class="t" style="left:280px;top:476px;font-size:11.5px;line-height:11.5px;color:#b2b2b2;transform:scaleX(0.9377);">30</div>
<div class="a" style="left:10px;top:491px;width:301px;height:18px;background:#232323;"></div>
<div class="a" style="left:10px;top:509px;width:301px;height:1px;background:#1a1a1a;"></div>
<svg class="a" style="left:26px;top:494px;" width="17" height="14" viewBox="0 0 17 14"><rect x="0.5" y="0.5" width="16" height="13" fill="#2a2a2a" stroke="#c8c8c8" stroke-width="1"/><rect x="0" y="1.2" width="2.2" height="1.6" fill="#c8c8c8"/><rect x="14.8" y="1.2" width="2.2" height="1.6" fill="#c8c8c8"/><rect x="0" y="4.4" width="2.2" height="1.6" fill="#c8c8c8"/><rect x="14.8" y="4.4" width="2.2" height="1.6" fill="#c8c8c8"/><rect x="0" y="7.6000000000000005" width="2.2" height="1.6" fill="#c8c8c8"/><rect x="14.8" y="7.6000000000000005" width="2.2" height="1.6" fill="#c8c8c8"/><rect x="0" y="10.8" width="2.2" height="1.6" fill="#c8c8c8"/><rect x="14.8" y="10.8" width="2.2" height="1.6" fill="#c8c8c8"/><rect x="3.2" y="1.8" width="10.6" height="10.4" fill="#868686"/><path d="M8.2 4H12.6L11.6 8.4H7.2Z" fill="#e23030"/><path d="M4.6 11L7.8 6.2L11 11Z" fill="#1fa83a"/><circle cx="6.2" cy="4.6" r="1.9" fill="#2f86ee"/></svg>
<div class="t" style="left:46px;top:496px;font-size:11.5px;line-height:11.5px;color:#c0c0c0;transform:scaleX(0.9692);">Main Comp</div>
<div class="a" style="left:133px;top:496px;width:9px;height:9px;background:#b39c77;"></div>
<div class="t" style="left:156px;top:496px;font-size:11.5px;line-height:11.5px;color:#b2b2b2;transform:scaleX(0.9699);">Composition</div>
<div class="t" style="left:280px;top:495px;font-size:11.5px;line-height:11.5px;color:#b2b2b2;transform:scaleX(0.9377);">30</div>
<div class="a" style="left:10px;top:510px;width:301px;height:18px;background:#232323;"></div>
<div class="a" style="left:10px;top:528px;width:301px;height:1px;background:#1a1a1a;"></div>
<svg class="a" style="left:26px;top:513px;" width="17" height="14" viewBox="0 0 17 14"><rect x="0.5" y="0.5" width="16" height="13" fill="#2a2a2a" stroke="#c8c8c8" stroke-width="1"/><rect x="0" y="1.2" width="2.2" height="1.6" fill="#c8c8c8"/><rect x="14.8" y="1.2" width="2.2" height="1.6" fill="#c8c8c8"/><rect x="0" y="4.4" width="2.2" height="1.6" fill="#c8c8c8"/><rect x="14.8" y="4.4" width="2.2" height="1.6" fill="#c8c8c8"/><rect x="0" y="7.6000000000000005" width="2.2" height="1.6" fill="#c8c8c8"/><rect x="14.8" y="7.6000000000000005" width="2.2" height="1.6" fill="#c8c8c8"/><rect x="0" y="10.8" width="2.2" height="1.6" fill="#c8c8c8"/><rect x="14.8" y="10.8" width="2.2" height="1.6" fill="#c8c8c8"/><rect x="3.2" y="1.8" width="10.6" height="10.4" fill="#868686"/><path d="M8.2 4H12.6L11.6 8.4H7.2Z" fill="#e23030"/><path d="M4.6 11L7.8 6.2L11 11Z" fill="#1fa83a"/><circle cx="6.2" cy="4.6" r="1.9" fill="#2f86ee"/></svg>
<div class="t" style="left:46px;top:515px;font-size:11.5px;line-height:11.5px;color:#c0c0c0;transform:scaleX(0.9488);">Wide Comp</div>
<div class="a" style="left:133px;top:515px;width:9px;height:9px;background:#b39c77;"></div>
<div class="t" style="left:156px;top:515px;font-size:11.5px;line-height:11.5px;color:#b2b2b2;transform:scaleX(0.9699);">Composition</div>
<div class="t" style="left:280px;top:514px;font-size:11.5px;line-height:11.5px;color:#b2b2b2;transform:scaleX(0.9377);">30</div>
<svg class="a" style="left:313px;top:266px;" width="13" height="12" viewBox="0 0 13 12"><rect x="4.5" y="0" width="4" height="4" fill="#b4b4b4"/><rect x="0" y="8" width="4.5" height="4" fill="#b4b4b4"/><rect x="8.5" y="8" width="4.5" height="4" fill="#b4b4b4"/><path d="M6.5 4V6.3M2.2 8V6.3H10.8V8" fill="none" stroke="#b4b4b4" stroke-width="1.1"/></svg>
<div class="a" style="left:10px;top:614px;width:172px;height:1px;background:#050505;"></div>
<div class="a" style="left:182px;top:614px;width:129px;height:1px;background:#1a1a1a;"></div>
<div class="a" style="left:10px;top:615px;width:172px;height:17px;background:#262626;"></div>
<svg class="a" style="left:12px;top:618px;" width="18" height="12" viewBox="0 0 18 12"><path d="M4 0.700H17.300V6.300H4Z" fill="none" stroke="#b4b4b4" stroke-width="1.200"/><path d="M6.500 3.500H15" stroke="#b4b4b4" stroke-width="1.300"/><path d="M0.700 3V11.300H12.500V8.500H2.800V3Z" fill="#b4b4b4"/></svg>
<svg class="a" style="left:39px;top:617px;" width="14" height="11" viewBox="0 0 14 11"><path d="M0.300 0H4.800L5.600 1H0.300Z" fill="#b4b4b4"/><path d="M0 2H13.600V10.300H0Z" fill="#b4b4b4"/></svg>
<svg class="a" style="left:63px;top:617px;" width="17" height="14" viewBox="0 0 17 14"><rect x="0.5" y="0.5" width="16" height="13" fill="#2a2a2a" stroke="#c8c8c8" stroke-width="1"/><rect x="0" y="1.2" width="2.2" height="1.6" fill="#c8c8c8"/><rect x="14.8" y="1.2" width="2.2" height="1.6" fill="#c8c8c8"/><rect x="0" y="4.4" width="2.2" height="1.6" fill="#c8c8c8"/><rect x="14.8" y="4.4" width="2.2" height="1.6" fill="#c8c8c8"/><rect x="0" y="7.6000000000000005" width="2.2" height="1.6" fill="#c8c8c8"/><rect x="14.8" y="7.6000000000000005" width="2.2" height="1.6" fill="#c8c8c8"/><rect x="0" y="10.8" width="2.2" height="1.6" fill="#c8c8c8"/><rect x="14.8" y="10.8" width="2.2" height="1.6" fill="#c8c8c8"/><rect x="3.2" y="1.8" width="10.6" height="10.4" fill="#868686"/><path d="M8.2 4H12.6L11.6 8.4H7.2Z" fill="#e23030"/><path d="M4.6 11L7.8 6.2L11 11Z" fill="#1fa83a"/><circle cx="6.2" cy="4.6" r="1.9" fill="#2f86ee"/></svg>
<svg class="a" style="left:88px;top:616px;" width="14" height="15" viewBox="0 0 14 15"><path d="M13.500 0.300C9 0.800 5 3.400 3.200 7.200L0.300 7.600L3.800 9.200L6.400 11.800L7 14.700L8.600 11.200C11.800 9 13.500 5 13.500 0.300Z" fill="#b4b4b4"/><path d="M3.500 8.800L1 11.500M5.200 10.500L3 13" stroke="#262626" stroke-width="0.800"/></svg>
<div class="a" style="left:110px;top:616px;width:47px;height:15px;background:#1d1d1d;border:1px solid #111;border-radius:2px;"></div>
<div class="t" style="left:120.5px;top:620px;font-size:10px;line-height:10px;color:#b2b2b2;transform:scaleX(0.8658);">16 bpc</div>
<svg class="a" style="left:163px;top:616px;" width="11" height="12" viewBox="0 0 11 12"><path d="M0 2.200H11M3.500 2V0.600H7.500V2" fill="none" stroke="#b4b4b4" stroke-width="1.200"/><path d="M1.300 3H9.700V11.400H1.300Z" fill="none" stroke="#b4b4b4" stroke-width="1.200"/><path d="M3.800 4.500V10M5.500 4.500V10M7.200 4.500V10" stroke="#b4b4b4" stroke-width="1"/></svg>
<div class="a" style="left:183px;top:615px;width:41px;height:16px;background:#2f2f2f;border-radius:8px;"></div>
<div class="a" style="left:8px;top:633px;width:1591px;height:4px;background:#161616;"></div>
<div class="a" style="left:333px;top:78px;width:1261px;height:554px;background:#232323;"></div>
<div class="a" style="left:1594px;top:78px;width:4px;height:559px;background:#161616;"></div>
<div class="a" style="left:387px;top:90px;width:2px;height:5px;background:#5a5a5a;"></div>
<div class="t" style="left:398px;top:87px;font-size:11.5px;line-height:11.5px;color:#d8d8d8;transform:scaleX(0.9699);">Composition</div>
<div class="t" style="left:464px;top:87px;font-size:11.5px;line-height:11.5px;color:#2d8ceb;transform:scaleX(0.9692);">Main Comp</div>
<div class="a" style="left:531px;top:89px;width:9px;height:1px;background:#c8c8c8;"></div>
<div class="a" style="left:531px;top:92px;width:9px;height:1px;background:#c8c8c8;"></div>
<div class="a" style="left:531px;top:95px;width:9px;height:1px;background:#c8c8c8;"></div>
<div class="a" style="left:353px;top:109px;width:90px;height:17px;background:#1b1b1b;border:1px solid #2b2b2b;border-radius:3px;"></div>
<div class="t" style="left:362px;top:112px;font-size:11.5px;line-height:11.5px;color:#2d8ceb;transform:scaleX(0.9692);">Main Comp</div>
<svg class="a" style="left:435px;top:113px;" width="5" height="8" viewBox="0 0 5 8"><path d="M4.3 0.6L0.9 4L4.3 7.4" fill="none" stroke="#2d8ceb" stroke-width="1.2"/></svg>
<div class="t" style="left:454px;top:112px;font-size:11.5px;line-height:11.5px;color:#b2b2b2;transform:scaleX(0.9488);">Wide Comp</div>
<svg class="a" style="left:527px;top:113px;" width="5" height="8" viewBox="0 0 5 8"><path d="M4.3 0.6L0.9 4L4.3 7.4" fill="none" stroke="#b4b4b4" stroke-width="1.2"/></svg>
<div class="t" style="left:546px;top:112px;font-size:11.5px;line-height:11.5px;color:#b2b2b2;transform:scaleX(0.9549);">Frame 06</div>
<div class="a" style="left:333px;top:130px;width:1261px;height:1px;background:#000;"></div>
<div class="a" style="left:333px;top:131px;width:1261px;height:1px;background:#2b2b2b;"></div>
<div class="a" style="left:335px;top:135px;width:214px;height:2px;background:repeating-linear-gradient(90deg,#9a8a6b 0 1px,#5c5241 1px 2px);"></div>
<div class="a" style="left:1381px;top:135px;width:213px;height:2px;background:repeating-linear-gradient(90deg,#9a8a6b 0 1px,#5c5241 1px 2px);"></div>
<div class="a" style="left:335px;top:600px;width:214px;height:2px;background:repeating-linear-gradient(90deg,#9a8a6b 0 1px,#5c5241 1px 2px);"></div>
<div class="a" style="left:1381px;top:600px;width:213px;height:2px;background:repeating-linear-gradient(90deg,#9a8a6b 0 1px,#5c5241 1px 2px);"></div>
<div class="a" style="left:551px;top:136px;width:826px;height:464px;background:#f48c8a;"></div>
<div class="a" style="left:550px;top:135px;width:828px;height:1px;background:repeating-linear-gradient(90deg,#4d66d0 0 2px,#14141c 2px 4px);"></div>
<div class="a" style="left:550px;top:600px;width:829px;height:3px;background:repeating-linear-gradient(90deg,#4d66d0 0 2px,#14141c 2px 4px);"></div>
<div class="a" style="left:550px;top:601px;width:829px;height:1px;background:repeating-linear-gradient(90deg,rgba(190,200,240,.55) 0 2px,rgba(200,180,130,.8) 2px 4px);"></div>
<div class="a" style="left:550px;top:135px;width:1px;height:466px;background:repeating-linear-gradient(180deg,#4d66d0 0 2px,#14141c 2px 4px);"></div>
<div class="a" style="left:1377px;top:135px;width:2px;height:466px;background:repeating-linear-gradient(180deg,#4d66d0 0 2px,#14141c 2px 4px);"></div>
<div class="a" style="left:548px;top:133px;width:7px;height:7px;background:#6f86f2;border:0;"></div>
<div class="a" style="left:549px;top:134px;width:5px;height:5px;background:#8c8470;"></div>
<div class="a" style="left:550px;top:135px;width:3px;height:3px;background:#ffffff;"></div>
<div class="a" style="left:961px;top:133px;width:7px;height:7px;background:#6f86f2;border:0;"></div>
<div class="a" style="left:962px;top:134px;width:5px;height:5px;background:#8c8470;"></div>
<div class="a" style="left:963px;top:135px;width:3px;height:3px;background:#ffffff;"></div>
<div class="a" style="left:1375px;top:133px;width:7px;height:7px;background:#6f86f2;border:0;"></div>
<div class="a" style="left:1376px;top:134px;width:5px;height:5px;background:#8c8470;"></div>
<div class="a" style="left:1377px;top:135px;width:3px;height:3px;background:#ffffff;"></div>
<div class="a" style="left:548px;top:366px;width:7px;height:7px;background:#6f86f2;border:0;"></div>
<div class="a" style="left:549px;top:367px;width:5px;height:5px;background:#8c8470;"></div>
<div class="a" style="left:550px;top:368px;width:3px;height:3px;background:#ffffff;"></div>
<div class="a" style="left:1375px;top:366px;width:7px;height:7px;background:#6f86f2;border:0;"></div>
<div class="a" style="left:1376px;top:367px;width:5px;height:5px;background:#8c8470;"></div>
<div class="a" style="left:1377px;top:368px;width:3px;height:3px;background:#ffffff;"></div>
<div class="a" style="left:548px;top:598px;width:7px;height:7px;background:#6f86f2;border:0;"></div>
<div class="a" style="left:549px;top:599px;width:5px;height:5px;background:#8c8470;"></div>
<div class="a" style="left:550px;top:600px;width:3px;height:3px;background:#ffffff;"></div>
<div class="a" style="left:961px;top:598px;width:7px;height:7px;background:#6f86f2;border:0;"></div>
<div class="a" style="left:962px;top:599px;width:5px;height:5px;background:#8c8470;"></div>
<div class="a" style="left:963px;top:600px;width:3px;height:3px;background:#ffffff;"></div>
<div class="a" style="left:1375px;top:598px;width:7px;height:7px;background:#6f86f2;border:0;"></div>
<div class="a" style="left:1376px;top:599px;width:5px;height:5px;background:#8c8470;"></div>
<div class="a" style="left:1377px;top:600px;width:3px;height:3px;background:#ffffff;"></div>
<svg class="a" style="left:959px;top:363px;" width="11" height="11" viewBox="0 0 11 11"><circle cx="5.500" cy="5.500" r="3" fill="none" stroke="#5b7be8" stroke-width="1.400"/><path d="M5.500 0V1.200M5.500 9.800V11M0 5.500H1.200M9.800 5.500H11" stroke="#7b8fee" stroke-width="1.100"/></svg>
<div class="a" style="left:333px;top:609px;width:1261px;height:1px;background:#1a1a1a;"></div>
<div class="a" style="left:339px;top:612px;width:69px;height:17px;background:#1d1d1d;border:1px solid #2e2e2e;border-radius:3px;"></div>
<div class="t" style="left:345px;top:615px;font-size:11.5px;line-height:11.5px;color:#b2b2b2;transform:scaleX(0.9434);">(43,1%)</div>
<svg class="a" style="left:394px;top:617px;" width="9" height="6" viewBox="0 0 9 6"><path d="M0.7 0.7L4.5 4.8L8.3 0.7" fill="none" stroke="#b4b4b4" stroke-width="1.2"/></svg>
<div class="a" style="left:412px;top:613px;width:2px;height:16px;background:#333;"></div>
<div class="a" style="left:418px;top:612px;width:87px;height:17px;background:#1d1d1d;border:1px solid #2e2e2e;border-radius:3px;"></div>
<div class="t" style="left:426px;top:615px;font-size:11.5px;line-height:11.5px;color:#b2b2b2;transform:scaleX(0.9956);">(Half)</div>
<svg class="a" style="left:491px;top:617px;" width="9" height="6" viewBox="0 0 9 6"><path d="M0.7 0.7L4.5 4.8L8.3 0.7" fill="none" stroke="#b4b4b4" stroke-width="1.2"/></svg>
<div class="a" style="left:509px;top:613px;width:2px;height:16px;background:#333;"></div>
<div class="a" style="left:516px;top:610px;width:21px;height:20px;background:#1a1a1a;border-radius:3px;"></div>
<svg class="a" style="left:519px;top:613px;" width="14" height="13" viewBox="0 0 14 13"><rect x="0.6" y="0.6" width="12.8" height="10.8" fill="none" stroke="#b4b4b4" stroke-width="1.2"/><path d="M8 2L4.5 6.5H7L6 10L9.5 5.5H7Z" fill="#b4b4b4"/><path d="M9 10H14L11.5 13Z" fill="#b4b4b4"/></svg>
<svg class="a" style="left:541px;top:614px;" width="14" height="11" viewBox="0 0 14 11"><rect x="0.5" y="0.5" width="13" height="10" fill="#4a4a4a" stroke="#b4b4b4" stroke-width="1"/><rect x="1" y="1" width="3" height="3" fill="#8a8a8a"/><rect x="7" y="1" width="3" height="3" fill="#8a8a8a"/><rect x="4" y="4" width="3" height="3" fill="#8a8a8a"/><rect x="10" y="4" width="3" height="3" fill="#8a8a8a"/><rect x="1" y="7" width="3" height="3" fill="#8a8a8a"/><rect x="7" y="7" width="3" height="3" fill="#8a8a8a"/></svg>
<svg class="a" style="left:563px;top:613px;" width="15" height="13" viewBox="0 0 15 13"><path d="M1.5 4.5L12.5 1.5V11.5H1.5Z" fill="none" stroke="#b4b4b4" stroke-width="1.2"/><rect x="0" y="3" width="3" height="3" fill="#b4b4b4"/><rect x="11" y="0" width="3" height="3" fill="#b4b4b4"/><rect x="0" y="10" width="3" height="3" fill="#b4b4b4"/><rect x="11" y="10" width="3" height="3" fill="#b4b4b4"/></svg>
<svg class="a" style="left:585px;top:614px;" width="14" height="11" viewBox="0 0 14 11"><rect x="0.6" y="0.6" width="12.8" height="9.8" fill="none" stroke="#b4b4b4" stroke-width="1.2"/><rect x="3" y="3" width="8" height="5" fill="#b4b4b4"/></svg>
<svg class="a" style="left:606px;top:612px;" width="15" height="15" viewBox="0 0 15 15"><path d="M2.5 2.5H12.5V9.5H2.5ZM0 4.5H2.5M12.5 4.5H15M0 7.5H2.5M12.5 7.5H15M5 0V2.5M10 0V2.5M5 9.5V12M10 9.5V12" fill="none" stroke="#b4b4b4" stroke-width="1.1"/><path d="M9 12H14.5L11.8 15Z" fill="#b4b4b4"/></svg>
<div class="a" style="left:630px;top:613px;width:2px;height:16px;background:#333;"></div>
<svg class="a" style="left:639px;top:613px;" width="14" height="14" viewBox="0 0 14 14"><circle cx="7" cy="3.6" r="3.2" fill="#e03030"/><circle cx="3.8" cy="8.2" r="3.2" fill="#2fb24a"/><circle cx="9.8" cy="8.2" r="3.2" fill="#3a6fe8"/><path d="M10 11.5H14L12 14Z" fill="#b4b4b4"/></svg>
<svg class="a" style="left:662px;top:613px;" width="13" height="13" viewBox="0 0 13 13"><circle cx="6.500" cy="6.500" r="6.200" fill="#b4b4b4"/><circle cx="6.500" cy="6.500" r="2" fill="#232323"/><path d="M6.500 0.300L8.300 5.500M12.500 5L8 7.800M9.500 12L5.500 8.300M1.800 10.500L5 6.200M1.500 3L6.500 4.600" stroke="#232323" stroke-width="1.100"/></svg>
<div class="t" style="left:681px;top:615px;font-size:11.5px;line-height:11.5px;color:#2d8ceb;transform:scaleX(0.9250);">+0,0</div>
<div class="a" style="left:717px;top:613px;width:2px;height:16px;background:#333;"></div>
<svg class="a" style="left:727px;top:614px;" width="15" height="11" viewBox="0 0 15 11"><path d="M0 2H3.5L4.8 0H10.2L11.5 2H15V11H0Z" fill="#b4b4b4"/><circle cx="7.5" cy="6.2" r="2.6" fill="#232323"/><circle cx="7.5" cy="6.2" r="1.2" fill="#b4b4b4"/></svg>
<svg class="a" style="left:749px;top:612px;" width="15" height="13" viewBox="0 0 15 13"><path d="M0.5 8C3 4 9 4 11.5 8C9 12 3 12 0.5 8Z" fill="#3c3c3c"/><circle cx="6" cy="8" r="2" fill="#232323"/><circle cx="11" cy="3.5" r="2.2" fill="none" stroke="#3c3c3c" stroke-width="1.3"/><circle cx="12.5" cy="7" r="1.6" fill="none" stroke="#3c3c3c" stroke-width="1.1"/></svg>
<div class="a" style="left:772px;top:613px;width:2px;height:16px;background:#333;"></div>
<div class="a" style="left:778px;top:612px;width:70px;height:17px;background:#1d1d1d;border:1px solid #2e2e2e;border-radius:3px;"></div>
<div class="t" style="left:786px;top:615px;font-size:11.5px;line-height:11.5px;color:#b2b2b2;transform:scaleX(0.9382);">0:00:00:00</div>
<div class="a" style="left:852px;top:613px;width:2px;height:16px;background:#333;"></div>
<div class="a" style="left:1594px;top:78px;width:5px;height:947px;background:#161616;"></div>
<div class="a" style="left:1599px;top:78px;width:314px;height:947px;background:#232323;border-radius:0 0 8px 0;"></div>
<div class="a" style="left:1899px;top:138px;width:14px;height:887px;background:#1d1d1d;border-radius:0 0 8px 0;"></div>
<div class="t" style="left:1612px;top:87px;font-size:11.5px;line-height:11.5px;color:#d0d0d0;transform:scaleX(0.9778);">Preview</div>
<div class="a" style="left:1664px;top:89px;width:8px;height:1px;background:#c8c8c8;"></div>
<div class="a" style="left:1664px;top:92px;width:8px;height:1px;background:#c8c8c8;"></div>
<div class="a" style="left:1664px;top:95px;width:8px;height:1px;background:#c8c8c8;"></div>
<svg class="a" style="left:1646px;top:115px;" width="12" height="10" viewBox="0 0 12 10"><rect x="0" y="0" width="2" height="10" fill="#b4b4b4"/><path d="M12 0V10L3 5Z" fill="#b4b4b4"/></svg>
<svg class="a" style="left:1669px;top:115px;" width="12" height="10" viewBox="0 0 12 10"><path d="M8.5 0V10L0 5Z" fill="#b4b4b4"/><rect x="10" y="0" width="2" height="10" fill="#b4b4b4"/></svg>
<svg class="a" style="left:1695px;top:115px;" width="9" height="10" viewBox="0 0 9 10"><path d="M0 0L9 5L0 10Z" fill="#b4b4b4"/></svg>
<svg class="a" style="left:1718px;top:115px;" width="12" height="10" viewBox="0 0 12 10"><rect x="0" y="0" width="2" height="10" fill="#b4b4b4"/><path d="M3.5 0L12 5L3.5 10Z" fill="#b4b4b4"/></svg>
<svg class="a" style="left:1742px;top:115px;" width="12" height="10" viewBox="0 0 12 10"><path d="M0 0L9 5L0 10Z" fill="#b4b4b4"/><rect x="10" y="0" width="2" height="10" fill="#b4b4b4"/></svg>
<div class="a" style="left:1599px;top:134px;width:314px;height:4px;background:#161616;"></div>
<div class="a" style="left:1599px;top:138px;width:300px;height:717px;border:1px solid #2d8ceb;"></div>
<div class="a" style="left:1901px;top:139px;width:9px;height:415px;background:#2e2e2e;border-radius:5px;"></div>
<div class="t" style="left:1612px;top:147px;font-size:11.5px;line-height:11.5px;color:#d8d8d8;transform:scaleX(0.9505);">Properties: Shape Layer 1</div>
<div class="a" style="left:1880px;top:149px;width:8px;height:1px;background:#c8c8c8;"></div>
<div class="a" style="left:1880px;top:152px;width:8px;height:1px;background:#c8c8c8;"></div>
<div class="a" style="left:1880px;top:155px;width:8px;height:1px;background:#c8c8c8;"></div>
<div class="t" style="left:1611px;top:171px;font-size:11.5px;line-height:11.5px;color:#c4c4c4;transform:scaleX(1.0151);">Layer Transform</div>
<div class="t" style="left:1752px;top:171px;font-size:11.5px;line-height:11.5px;color:#2d8ceb;transform:scaleX(0.8986);">Reset</div>
<svg class="a" style="left:1622.5px;top:189px;" width="12" height="14" viewBox="0 0 12 14"><circle cx="6" cy="8" r="5" fill="none" stroke="#b4b4b4" stroke-width="1.15"/><path d="M4.2 1H7.8M6 1V3" stroke="#b4b4b4" stroke-width="1.3"/><path d="M9.6 3.4L10.8 2.2" stroke="#b4b4b4" stroke-width="1.2"/></svg>
<div class="t" style="left:1659px;top:191px;font-size:11.5px;line-height:11.5px;color:#b2b2b2;transform:scaleX(0.9414);">Anchor Point</div>
<div class="t" style="left:1751px;top:190px;font-size:12px;line-height:12px;color:#2d8ceb;transform:scaleX(0.93);">0</div>
<div class="t" style="left:1801px;top:190px;font-size:12px;line-height:12px;color:#2d8ceb;transform:scaleX(0.93);">0</div>
<div class="a" style="left:1749px;top:204px;width:39px;height:1px;background:#4a4a4a;"></div>
<div class="a" style="left:1799px;top:204px;width:39px;height:1px;background:#4a4a4a;"></div>
<svg class="a" style="left:1622.5px;top:209px;" width="12" height="14" viewBox="0 0 12 14"><circle cx="6" cy="8" r="5" fill="none" stroke="#b4b4b4" stroke-width="1.15"/><path d="M4.2 1H7.8M6 1V3" stroke="#b4b4b4" stroke-width="1.3"/><path d="M9.6 3.4L10.8 2.2" stroke="#b4b4b4" stroke-width="1.2"/></svg>
<div class="t" style="left:1659px;top:211px;font-size:11.5px;line-height:11.5px;color:#b2b2b2;transform:scaleX(0.9775);">Position</div>
<div class="t" style="left:1751px;top:210px;font-size:12px;line-height:12px;color:#2d8ceb;transform:scaleX(0.93);">960</div>
<div class="t" style="left:1801px;top:210px;font-size:12px;line-height:12px;color:#2d8ceb;transform:scaleX(0.93);">540</div>
<div class="a" style="left:1749px;top:224px;width:39px;height:1px;background:#4a4a4a;"></div>
<div class="a" style="left:1799px;top:224px;width:39px;height:1px;background:#4a4a4a;"></div>
<svg class="a" style="left:1622.5px;top:229px;" width="12" height="14" viewBox="0 0 12 14"><circle cx="6" cy="8" r="5" fill="none" stroke="#b4b4b4" stroke-width="1.15"/><path d="M4.2 1H7.8M6 1V3" stroke="#b4b4b4" stroke-width="1.3"/><path d="M9.6 3.4L10.8 2.2" stroke="#b4b4b4" stroke-width="1.2"/></svg>
<div class="t" style="left:1659px;top:231px;font-size:11.5px;line-height:11.5px;color:#b2b2b2;transform:scaleX(0.8686);">Scale</div>
<svg class="a" style="left:1727px;top:232px;" width="14" height="8" viewBox="0 0 14 8"><path d="M6 6.6H4A2.9 2.9 0 0 1 4 0.9H6.2C8 0.9 9.2 2.4 9 4" fill="none" stroke="#2d8ceb" stroke-width="1.5"/><path d="M8 1.4H10A2.9 2.9 0 0 1 10 7.1H7.8C6 7.1 4.8 5.6 5 4" fill="none" stroke="#2d8ceb" stroke-width="1.5"/></svg>
<div class="t" style="left:1751px;top:230px;font-size:12px;line-height:12px;color:#2d8ceb;transform:scaleX(0.93);">100</div>
<div class="t" style="left:1771.5px;top:231px;font-size:11px;line-height:11px;color:#b2b2b2;transform:scaleX(0.9);">%</div>
<div class="t" style="left:1801px;top:230px;font-size:12px;line-height:12px;color:#2d8ceb;transform:scaleX(0.93);">100</div>
<div class="t" style="left:1821.5px;top:231px;font-size:11px;line-height:11px;color:#b2b2b2;transform:scaleX(0.9);">%</div>
<div class="a" style="left:1749px;top:244px;width:39px;height:1px;background:#4a4a4a;"></div>
<div class="a" style="left:1799px;top:244px;width:39px;height:1px;background:#4a4a4a;"></div>
<svg class="a" style="left:1622.5px;top:249px;" width="12" height="14" viewBox="0 0 12 14"><circle cx="6" cy="8" r="5" fill="none" stroke="#b4b4b4" stroke-width="1.15"/><path d="M4.2 1H7.8M6 1V3" stroke="#b4b4b4" stroke-width="1.3"/><path d="M9.6 3.4L10.8 2.2" stroke="#b4b4b4" stroke-width="1.2"/></svg>
<div class="t" style="left:1659px;top:251px;font-size:11.5px;line-height:11.5px;color:#b2b2b2;transform:scaleX(0.9803);">Rotation</div>
<div class="t" style="left:1751px;top:250px;font-size:12px;line-height:12px;color:#2d8ceb;transform:scaleX(0.93);">0</div>
<div class="t" style="left:1759.5px;top:251px;font-size:11px;line-height:11px;color:#b2b2b2;transform:scaleX(0.9);">x</div>
<div class="t" style="left:1764.5px;top:250px;font-size:12px;line-height:12px;color:#2d8ceb;transform:scaleX(0.93);">+0</div>
<div class="t" style="left:1779px;top:251px;font-size:11px;line-height:11px;color:#b2b2b2;transform:scaleX(0.9);">°</div>
<div class="a" style="left:1749px;top:264px;width:38px;height:1px;background:#4a4a4a;"></div>
<svg class="a" style="left:1622.5px;top:269px;" width="12" height="14" viewBox="0 0 12 14"><circle cx="6" cy="8" r="5" fill="none" stroke="#b4b4b4" stroke-width="1.15"/><path d="M4.2 1H7.8M6 1V3" stroke="#b4b4b4" stroke-width="1.3"/><path d="M9.6 3.4L10.8 2.2" stroke="#b4b4b4" stroke-width="1.2"/></svg>
<div class="t" style="left:1659px;top:271px;font-size:11.5px;line-height:11.5px;color:#b2b2b2;transform:scaleX(0.9487);">Opacity</div>
<div class="t" style="left:1751px;top:270px;font-size:12px;line-height:12px;color:#2d8ceb;transform:scaleX(0.93);">100</div>
<div class="t" style="left:1771.5px;top:271px;font-size:11px;line-height:11px;color:#b2b2b2;transform:scaleX(0.9);">%</div>
<div class="a" style="left:1749px;top:284px;width:39px;height:1px;background:#4a4a4a;"></div>
<div class="a" style="left:1610px;top:291px;width:276px;height:2px;background:#161616;"></div>
<div class="t" style="left:1611px;top:303px;font-size:11.5px;line-height:11.5px;color:#c4c4c4;transform:scaleX(1.0000);">Layer Contents</div>
<div class="a" style="left:1610px;top:324px;width:278px;height:150px;background:#1d1d1d;border-radius:3px;"></div>
<div class="a" style="left:1634px;top:325px;width:253px;height:19px;background:#484848;border:2px solid #b4b4b4;"></div>
<svg class="a" style="left:1616px;top:331px;" width="11" height="8" viewBox="0 0 11 8"><path d="M0.3 4C2.5 0.3 8.5 0.3 10.7 4C8.5 7.7 2.5 7.7 0.3 4Z" fill="#d0d0d0"/><circle cx="5.5" cy="4" r="2.4" fill="#1d1d1d"/><circle cx="5.5" cy="4" r="1.2" fill="#d0d0d0"/></svg>
<svg class="a" style="left:1616px;top:351px;" width="11" height="8" viewBox="0 0 11 8"><path d="M0.3 4C2.5 0.3 8.5 0.3 10.7 4C8.5 7.7 2.5 7.7 0.3 4Z" fill="#d0d0d0"/><circle cx="5.5" cy="4" r="2.4" fill="#1d1d1d"/><circle cx="5.5" cy="4" r="1.2" fill="#d0d0d0"/></svg>
<svg class="a" style="left:1640px;top:329px;" width="11" height="11" viewBox="0 0 11 11"><path d="M5.5 0.3L7.1 3.9L10.9 4.3L8 6.9L8.9 10.7L5.5 8.7L2.1 10.7L3 6.9L0.1 4.3L3.9 3.9Z" fill="#c8c8c8"/></svg>
<div class="t" style="left:1659px;top:330px;font-size:11.5px;line-height:11.5px;color:#b2b2b2;transform:scaleX(0.9490);">Shape Layer 1</div>
<div class="a" style="left:1634px;top:345px;width:253px;height:19px;background:#4a4a4a;"></div>
<svg class="a" style="left:1664px;top:349px;" width="11" height="11" viewBox="0 0 11 11"><path d="M5.5 0.3L7.1 3.9L10.9 4.3L8 6.9L8.9 10.7L5.5 8.7L2.1 10.7L3 6.9L0.1 4.3L3.9 3.9Z" fill="#c8c8c8"/></svg>
<div class="t" style="left:1683px;top:350px;font-size:11.5px;line-height:11.5px;color:#b2b2b2;transform:scaleX(0.9613);">Rectangle 1</div>
<div class="a" style="left:1610px;top:485px;width:276px;height:2px;background:#161616;"></div>
<div class="t" style="left:1611px;top:497px;font-size:11.5px;line-height:11.5px;color:#c4c4c4;transform:scaleX(0.9902);">Shape Properties</div>
<div class="t" style="left:1752px;top:497px;font-size:11.5px;line-height:11.5px;color:#2d8ceb;transform:scaleX(0.8986);">Reset</div>
<svg class="a" style="left:1622.5px;top:521px;" width="12" height="14" viewBox="0 0 12 14"><circle cx="6" cy="8" r="5" fill="none" stroke="#b4b4b4" stroke-width="1.15"/><path d="M4.2 1H7.8M6 1V3" stroke="#b4b4b4" stroke-width="1.3"/><path d="M9.6 3.4L10.8 2.2" stroke="#b4b4b4" stroke-width="1.2"/></svg>
<div class="t" style="left:1659px;top:523px;font-size:11.5px;line-height:11.5px;color:#b2b2b2;transform:scaleX(0.8939);">Size</div>
<svg class="a" style="left:1727px;top:524px;" width="14" height="8" viewBox="0 0 14 8"><path d="M6 6.6H4A2.9 2.9 0 0 1 4 0.9H6.2C8 0.9 9.2 2.4 9 4" fill="none" stroke="#2d8ceb" stroke-width="1.5"/><path d="M8 1.4H10A2.9 2.9 0 0 1 10 7.1H7.8C6 7.1 4.8 5.6 5 4" fill="none" stroke="#2d8ceb" stroke-width="1.5"/></svg>
<div class="t" style="left:1751px;top:522px;font-size:12px;line-height:12px;color:#2d8ceb;transform:scaleX(0.93);">1920</div>
<div class="t" style="left:1801px;top:522px;font-size:12px;line-height:12px;color:#2d8ceb;transform:scaleX(0.93);">1080</div>
<div class="a" style="left:1749px;top:536px;width:39px;height:1px;background:#4a4a4a;"></div>
<div class="a" style="left:1799px;top:536px;width:39px;height:1px;background:#4a4a4a;"></div>
<svg class="a" style="left:1622.5px;top:541px;" width="12" height="14" viewBox="0 0 12 14"><circle cx="6" cy="8" r="5" fill="none" stroke="#b4b4b4" stroke-width="1.15"/><path d="M4.2 1H7.8M6 1V3" stroke="#b4b4b4" stroke-width="1.3"/><path d="M9.6 3.4L10.8 2.2" stroke="#b4b4b4" stroke-width="1.2"/></svg>
<div class="t" style="left:1659px;top:543px;font-size:11.5px;line-height:11.5px;color:#b2b2b2;transform:scaleX(0.9108);">Roundness</div>
<div class="t" style="left:1751px;top:542px;font-size:12px;line-height:12px;color:#2d8ceb;transform:scaleX(0.93);">0</div>
<div class="a" style="left:1749px;top:556px;width:39px;height:1px;background:#4a4a4a;"></div>
<svg class="a" style="left:1622.5px;top:561px;" width="12" height="14" viewBox="0 0 12 14"><circle cx="6" cy="8" r="5" fill="none" stroke="#b4b4b4" stroke-width="1.15"/><path d="M4.2 1H7.8M6 1V3" stroke="#b4b4b4" stroke-width="1.3"/><path d="M9.6 3.4L10.8 2.2" stroke="#b4b4b4" stroke-width="1.2"/></svg>
<div class="t" style="left:1659px;top:563px;font-size:11.5px;line-height:11.5px;color:#b2b2b2;transform:scaleX(0.9543);">Stroke Color</div>
<div class="a" style="left:1749px;top:560px;width:16px;height:16px;background:#9a9a9a;border:1px solid #f0f0f0;"></div>
<svg class="a" style="left:1749px;top:560px;" width="16" height="16" viewBox="0 0 16 16"><path d="M1.5 14.5L14.5 1.5" stroke="#f01010" stroke-width="1.9"/></svg>
<svg class="a" style="left:1772px;top:561px;" width="15" height="15" viewBox="0 0 15 15"><path d="M10 1.2A2.2 2.2 0 0 1 13.8 5L12 6.8L12.8 7.6L11.6 8.8L6.2 3.4L7.4 2.2L8.2 3Z" fill="#4a4a4a"/><path d="M7.2 5.4L9.6 7.8L4 13.4L1.8 14L0.8 14.8L0.2 14.2L1 13.2L1.6 11Z" fill="none" stroke="#4a4a4a" stroke-width="1.1"/></svg>
<div class="a" style="left:1793px;top:558px;width:91px;height:19px;background:#1d1d1d;border:1px solid #2e2e2e;border-radius:3px;"></div>
<div class="t" style="left:1801px;top:562px;font-size:12px;line-height:12px;color:#d8d8d8;transform:scaleX(0.9063);">None</div>
<svg class="a" style="left:1870px;top:565px;" width="9" height="6" viewBox="0 0 9 6"><path d="M0.7 0.7L4.5 4.8L8.3 0.7" fill="none" stroke="#d0d0d0" stroke-width="1.2"/></svg>
<svg class="a" style="left:1622.5px;top:581px;" width="12" height="14" viewBox="0 0 12 14"><circle cx="6" cy="8" r="5" fill="none" stroke="#b4b4b4" stroke-width="1.15"/><path d="M4.2 1H7.8M6 1V3" stroke="#b4b4b4" stroke-width="1.3"/><path d="M9.6 3.4L10.8 2.2" stroke="#b4b4b4" stroke-width="1.2"/></svg>
<div class="t" style="left:1659px;top:583px;font-size:11.5px;line-height:11.5px;color:#b2b2b2;transform:scaleX(0.9722);">Stroke Width</div>
<div class="t" style="left:1751px;top:582px;font-size:12px;line-height:12px;color:#2d8ceb;transform:scaleX(0.93);">0</div>
<div class="a" style="left:1749px;top:596px;width:39px;height:1px;background:#4a4a4a;"></div>
<div class="t" style="left:1659px;top:603px;font-size:11.5px;line-height:11.5px;color:#b2b2b2;transform:scaleX(0.9338);">Line Cap</div>
<div class="a" style="left:1749px;top:599px;width:28px;height:19px;background:#161616;border:1px solid #111;border-radius:2px;"></div>
<div class="a" style="left:1778px;top:599px;width:28px;height:19px;background:#1d1d1d;border:1px solid #111;border-radius:2px;"></div>
<div class="a" style="left:1807px;top:599px;width:28px;height:19px;background:#1d1d1d;border:1px solid #111;border-radius:2px;"></div>
<svg class="a" style="left:1757px;top:602px;" width="13" height="12" viewBox="0 0 11 10"><path d="M3 1H11V4H6V6H11V9H3Z" fill="#2d8ceb"/><path d="M0.6 2.6H5.4V7.4H0.6Z" fill="#161616" stroke="#2d8ceb" stroke-width="1.1"/></svg>
<svg class="a" style="left:1785px;top:602px;" width="13" height="12" viewBox="0 0 11 10"><path d="M11 1V4H6A1 1 0 0 0 6 6H11V9H5A4 4 0 0 1 5 1Z" fill="#b4b4b4"/></svg>
<svg class="a" style="left:1814px;top:602px;" width="13" height="12" viewBox="0 0 11 10"><path d="M1 1H11V4H6V6H11V9H1Z" fill="#b4b4b4"/></svg>
<div class="t" style="left:1659px;top:624px;font-size:11.5px;line-height:11.5px;color:#b2b2b2;transform:scaleX(0.9338);">Line Join</div>
<div class="a" style="left:1749px;top:620px;width:28px;height:19px;background:#161616;border:1px solid #111;border-radius:2px;"></div>
<div class="a" style="left:1778px;top:620px;width:28px;height:19px;background:#1d1d1d;border:1px solid #111;border-radius:2px;"></div>
<div class="a" style="left:1807px;top:620px;width:28px;height:19px;background:#1d1d1d;border:1px solid #111;border-radius:2px;"></div>
<svg class="a" style="left:1757px;top:624px;" width="11" height="10" viewBox="0 0 11 10"><path d="M0.5 0H5V6H11V10H0.5Z" fill="#2d8ceb"/></svg>
<svg class="a" style="left:1786px;top:624px;" width="11" height="10" viewBox="0 0 11 10"><path d="M1 0H5V5A1 1 0 0 0 6 6H11V10H5A4 4 0 0 1 1 6Z" fill="#b4b4b4"/></svg>
<svg class="a" style="left:1815px;top:624px;" width="11" height="10" viewBox="0 0 11 10"><path d="M1 0H5V5L6 6H11V10H4L1 7Z" fill="#b4b4b4"/></svg>
<svg class="a" style="left:1622.5px;top:643px;" width="12" height="14" viewBox="0 0 12 14"><circle cx="6" cy="8" r="5" fill="none" stroke="#b4b4b4" stroke-width="1.15"/><path d="M4.2 1H7.8M6 1V3" stroke="#b4b4b4" stroke-width="1.3"/><path d="M9.6 3.4L10.8 2.2" stroke="#b4b4b4" stroke-width="1.2"/></svg>
<div class="t" style="left:1659px;top:645px;font-size:11.5px;line-height:11.5px;color:#b2b2b2;transform:scaleX(0.9697);">Fill Color</div>
<div class="a" style="left:1749px;top:642px;width:16px;height:16px;background:#f48c8a;border:1px solid #f0f0f0;"></div>
<svg class="a" style="left:1772px;top:642px;" width="15" height="15" viewBox="0 0 15 15"><path d="M10 1.2A2.2 2.2 0 0 1 13.8 5L12 6.8L12.8 7.6L11.6 8.8L6.2 3.4L7.4 2.2L8.2 3Z" fill="#c0c0c0"/><path d="M7.2 5.4L9.6 7.8L4 13.4L1.8 14L0.8 14.8L0.2 14.2L1 13.2L1.6 11Z" fill="none" stroke="#c0c0c0" stroke-width="1.1"/></svg>
<div class="a" style="left:1793px;top:640px;width:91px;height:19px;background:#1d1d1d;border:1px solid #2e2e2e;border-radius:3px;"></div>
<div class="t" style="left:1801px;top:644px;font-size:12px;line-height:12px;color:#d8d8d8;transform:scaleX(0.9028);">Solid Color</div>
<svg class="a" style="left:1870px;top:647px;" width="9" height="6" viewBox="0 0 9 6"><path d="M0.7 0.7L4.5 4.8L8.3 0.7" fill="none" stroke="#d0d0d0" stroke-width="1.2"/></svg>
<div class="a" style="left:1610px;top:665px;width:276px;height:2px;background:#161616;"></div>
<div class="t" style="left:1611px;top:677px;font-size:11.5px;line-height:11.5px;color:#c4c4c4;transform:scaleX(1.0089);">Shape Transform</div>
<div class="t" style="left:1752px;top:677px;font-size:11.5px;line-height:11.5px;color:#2d8ceb;transform:scaleX(0.8986);">Reset</div>
<svg class="a" style="left:1622.5px;top:701px;" width="12" height="14" viewBox="0 0 12 14"><circle cx="6" cy="8" r="5" fill="none" stroke="#b4b4b4" stroke-width="1.15"/><path d="M4.2 1H7.8M6 1V3" stroke="#b4b4b4" stroke-width="1.3"/><path d="M9.6 3.4L10.8 2.2" stroke="#b4b4b4" stroke-width="1.2"/></svg>
<div class="t" style="left:1659px;top:703px;font-size:11.5px;line-height:11.5px;color:#b2b2b2;transform:scaleX(0.9414);">Anchor Point</div>
<div class="t" style="left:1751px;top:702px;font-size:12px;line-height:12px;color:#2d8ceb;transform:scaleX(0.93);">0</div>
<div class="t" style="left:1801px;top:702px;font-size:12px;line-height:12px;color:#2d8ceb;transform:scaleX(0.93);">0</div>
<div class="a" style="left:1749px;top:716px;width:39px;height:1px;background:#4a4a4a;"></div>
<div class="a" style="left:1799px;top:716px;width:39px;height:1px;background:#4a4a4a;"></div>
<svg class="a" style="left:1622.5px;top:721px;" width="12" height="14" viewBox="0 0 12 14"><circle cx="6" cy="8" r="5" fill="none" stroke="#b4b4b4" stroke-width="1.15"/><path d="M4.2 1H7.8M6 1V3" stroke="#b4b4b4" stroke-width="1.3"/><path d="M9.6 3.4L10.8 2.2" stroke="#b4b4b4" stroke-width="1.2"/></svg>
<div class="t" style="left:1659px;top:723px;font-size:11.5px;line-height:11.5px;color:#b2b2b2;transform:scaleX(0.9775);">Position</div>
<div class="t" style="left:1751px;top:722px;font-size:12px;line-height:12px;color:#2d8ceb;transform:scaleX(0.93);">0</div>
<div class="t" style="left:1801px;top:722px;font-size:12px;line-height:12px;color:#2d8ceb;transform:scaleX(0.93);">0</div>
<div class="a" style="left:1749px;top:736px;width:39px;height:1px;background:#4a4a4a;"></div>
<div class="a" style="left:1799px;top:736px;width:39px;height:1px;background:#4a4a4a;"></div>
<svg class="a" style="left:1622.5px;top:741px;" width="12" height="14" viewBox="0 0 12 14"><circle cx="6" cy="8" r="5" fill="none" stroke="#b4b4b4" stroke-width="1.15"/><path d="M4.2 1H7.8M6 1V3" stroke="#b4b4b4" stroke-width="1.3"/><path d="M9.6 3.4L10.8 2.2" stroke="#b4b4b4" stroke-width="1.2"/></svg>
<div class="t" style="left:1659px;top:743px;font-size:11.5px;line-height:11.5px;color:#b2b2b2;transform:scaleX(0.8686);">Scale</div>
<svg class="a" style="left:1727px;top:744px;" width="14" height="8" viewBox="0 0 14 8"><path d="M6 6.6H4A2.9 2.9 0 0 1 4 0.9H6.2C8 0.9 9.2 2.4 9 4" fill="none" stroke="#2d8ceb" stroke-width="1.5"/><path d="M8 1.4H10A2.9 2.9 0 0 1 10 7.1H7.8C6 7.1 4.8 5.6 5 4" fill="none" stroke="#2d8ceb" stroke-width="1.5"/></svg>
<div class="t" style="left:1751px;top:742px;font-size:12px;line-height:12px;color:#2d8ceb;transform:scaleX(0.93);">100</div>
<div class="t" style="left:1771.5px;top:743px;font-size:11px;line-height:11px;color:#b2b2b2;transform:scaleX(0.9);">%</div>
<div class="t" style="left:1801px;top:742px;font-size:12px;line-height:12px;color:#2d8ceb;transform:scaleX(0.93);">100</div>
<div class="t" style="left:1821.5px;top:743px;font-size:11px;line-height:11px;color:#b2b2b2;transform:scaleX(0.9);">%</div>
<div class="a" style="left:1749px;top:756px;width:39px;height:1px;background:#4a4a4a;"></div>
<div class="a" style="left:1799px;top:756px;width:39px;height:1px;background:#4a4a4a;"></div>
<svg class="a" style="left:1622.5px;top:761px;" width="12" height="14" viewBox="0 0 12 14"><circle cx="6" cy="8" r="5" fill="none" stroke="#b4b4b4" stroke-width="1.15"/><path d="M4.2 1H7.8M6 1V3" stroke="#b4b4b4" stroke-width="1.3"/><path d="M9.6 3.4L10.8 2.2" stroke="#b4b4b4" stroke-width="1.2"/></svg>
<div class="t" style="left:1659px;top:763px;font-size:11.5px;line-height:11.5px;color:#b2b2b2;transform:scaleX(0.9244);">Skew</div>
<div class="t" style="left:1751px;top:762px;font-size:12px;line-height:12px;color:#2d8ceb;transform:scaleX(0.93);">0</div>
<div class="a" style="left:1749px;top:776px;width:39px;height:1px;background:#4a4a4a;"></div>
<svg class="a" style="left:1622.5px;top:781px;" width="12" height="14" viewBox="0 0 12 14"><circle cx="6" cy="8" r="5" fill="none" stroke="#b4b4b4" stroke-width="1.15"/><path d="M4.2 1H7.8M6 1V3" stroke="#b4b4b4" stroke-width="1.3"/><path d="M9.6 3.4L10.8 2.2" stroke="#b4b4b4" stroke-width="1.2"/></svg>
<div class="t" style="left:1659px;top:783px;font-size:11.5px;line-height:11.5px;color:#b2b2b2;transform:scaleX(0.9347);">Skew Axis</div>
<div class="t" style="left:1751px;top:782px;font-size:12px;line-height:12px;color:#2d8ceb;transform:scaleX(0.93);">0</div>
<div class="t" style="left:1759.5px;top:783px;font-size:11px;line-height:11px;color:#b2b2b2;transform:scaleX(0.9);">x</div>
<div class="t" style="left:1764.5px;top:782px;font-size:12px;line-height:12px;color:#2d8ceb;transform:scaleX(0.93);">+0</div>
<div class="t" style="left:1779px;top:783px;font-size:11px;line-height:11px;color:#b2b2b2;transform:scaleX(0.9);">°</div>
<div class="a" style="left:1749px;top:796px;width:38px;height:1px;background:#4a4a4a;"></div>
<svg class="a" style="left:1622.5px;top:801px;" width="12" height="14" viewBox="0 0 12 14"><circle cx="6" cy="8" r="5" fill="none" stroke="#b4b4b4" stroke-width="1.15"/><path d="M4.2 1H7.8M6 1V3" stroke="#b4b4b4" stroke-width="1.3"/><path d="M9.6 3.4L10.8 2.2" stroke="#b4b4b4" stroke-width="1.2"/></svg>
<div class="t" style="left:1659px;top:803px;font-size:11.5px;line-height:11.5px;color:#b2b2b2;transform:scaleX(0.9803);">Rotation</div>
<div class="t" style="left:1751px;top:802px;font-size:12px;line-height:12px;color:#2d8ceb;transform:scaleX(0.93);">0</div>
<div class="t" style="left:1759.5px;top:803px;font-size:11px;line-height:11px;color:#b2b2b2;transform:scaleX(0.9);">x</div>
<div class="t" style="left:1764.5px;top:802px;font-size:12px;line-height:12px;color:#2d8ceb;transform:scaleX(0.93);">+0</div>
<div class="t" style="left:1779px;top:803px;font-size:11px;line-height:11px;color:#b2b2b2;transform:scaleX(0.9);">°</div>
<div class="a" style="left:1749px;top:816px;width:38px;height:1px;background:#4a4a4a;"></div>
<svg class="a" style="left:1622.5px;top:821px;" width="12" height="14" viewBox="0 0 12 14"><circle cx="6" cy="8" r="5" fill="none" stroke="#b4b4b4" stroke-width="1.15"/><path d="M4.2 1H7.8M6 1V3" stroke="#b4b4b4" stroke-width="1.3"/><path d="M9.6 3.4L10.8 2.2" stroke="#b4b4b4" stroke-width="1.2"/></svg>
<div class="t" style="left:1659px;top:823px;font-size:11.5px;line-height:11.5px;color:#b2b2b2;transform:scaleX(0.9487);">Opacity</div>
<div class="t" style="left:1751px;top:822px;font-size:12px;line-height:12px;color:#2d8ceb;transform:scaleX(0.93);">100</div>
<div class="t" style="left:1771.5px;top:823px;font-size:11px;line-height:11px;color:#b2b2b2;transform:scaleX(0.9);">%</div>
<div class="a" style="left:1749px;top:836px;width:39px;height:1px;background:#4a4a4a;"></div>
<div class="t" style="left:1612px;top:863px;font-size:12px;line-height:12px;color:#d0d0d0;transform:scaleX(0.9368);">Align</div>
<div class="a" style="left:1880px;top:866px;width:8px;height:1px;background:#c8c8c8;"></div>
<div class="a" style="left:1880px;top:869px;width:8px;height:1px;background:#c8c8c8;"></div>
<div class="a" style="left:1880px;top:872px;width:8px;height:1px;background:#c8c8c8;"></div>
<div class="t" style="left:1606px;top:889px;font-size:12px;line-height:12px;color:#b2b2b2;transform:scaleX(0.9309);">Align Layers to:</div>
<div class="a" style="left:1692px;top:886px;width:111px;height:18px;background:#1d1d1d;border:1px solid #2e2e2e;border-radius:3px;"></div>
<div class="t" style="left:1700px;top:889px;font-size:12px;line-height:12px;color:#d8d8d8;transform:scaleX(0.9445);">Composition</div>
<svg class="a" style="left:1789px;top:893px;" width="9" height="6" viewBox="0 0 9 6"><path d="M0.7 0.7L4.5 4.8L8.3 0.7" fill="none" stroke="#d0d0d0" stroke-width="1.2"/></svg>
<svg class="a" style="left:1610px;top:910px;" width="17" height="18" viewBox="0 0 17 18"><rect x="0.5" y="0" width="1" height="18" fill="#c0c0c0"/><rect x="3" y="2" width="8" height="5.5" fill="#c0c0c0"/><rect x="3" y="10" width="13" height="5.5" fill="#c0c0c0"/></svg>
<svg class="a" style="left:1645px;top:910px;" width="15" height="18" viewBox="0 0 15 18"><rect x="7" y="0" width="1" height="18" fill="#c0c0c0"/><rect x="3.5" y="2" width="8" height="5.5" fill="#c0c0c0"/><rect x="1" y="10" width="13" height="5.5" fill="#c0c0c0"/></svg>
<svg class="a" style="left:1679px;top:910px;" width="17" height="18" viewBox="0 0 17 18"><rect x="15.5" y="0" width="1" height="18" fill="#c0c0c0"/><rect x="6" y="2" width="8" height="5.5" fill="#c0c0c0"/><rect x="1" y="10" width="13" height="5.5" fill="#c0c0c0"/></svg>
<svg class="a" style="left:1712px;top:910px;" width="18" height="18" viewBox="0 0 18 18"><rect x="0" y="0.5" width="18" height="1" fill="#c0c0c0"/><rect x="3" y="3" width="5" height="13" fill="#c0c0c0"/><rect x="10" y="3" width="5.5" height="8" fill="#c0c0c0"/></svg>
<svg class="a" style="left:1746px;top:910px;" width="18" height="18" viewBox="0 0 18 18"><rect x="0" y="8" width="18" height="1" fill="#c0c0c0"/><rect x="3" y="2" width="5" height="13" fill="#c0c0c0"/><rect x="10" y="4.5" width="5.5" height="8" fill="#c0c0c0"/></svg>
<svg class="a" style="left:1780px;top:910px;" width="18" height="18" viewBox="0 0 18 18"><rect x="0" y="16.5" width="18" height="1" fill="#c0c0c0"/><rect x="3" y="2" width="5" height="13" fill="#c0c0c0"/><rect x="10" y="7" width="5.5" height="8" fill="#c0c0c0"/></svg>
<div class="a" style="left:1605px;top:932px;width:195px;height:1px;background:#303030;"></div>
<div class="t" style="left:1606px;top:937px;font-size:12px;line-height:12px;color:#b2b2b2;transform:scaleX(0.9424);">Distribute Layers:</div>
<svg class="a" style="left:1610px;top:953px;" width="18" height="18" viewBox="0 0 18 18"><rect x="0" y="0.5" width="18" height="1" fill="#3c3c3c"/><rect x="0" y="8.5" width="18" height="1" fill="#3c3c3c"/><rect x="5" y="2.5" width="8" height="4" fill="#3c3c3c"/><rect x="3" y="11" width="12" height="5" fill="#3c3c3c"/></svg>
<svg class="a" style="left:1644px;top:953px;" width="18" height="18" viewBox="0 0 18 18"><rect x="0" y="4" width="18" height="1" fill="#3c3c3c"/><rect x="0" y="13" width="18" height="1" fill="#3c3c3c"/><rect x="5" y="2.5" width="8" height="4" fill="#3c3c3c"/><rect x="3" y="11" width="12" height="5" fill="#3c3c3c"/></svg>
<svg class="a" style="left:1678px;top:953px;" width="18" height="18" viewBox="0 0 18 18"><rect x="0" y="7" width="18" height="1" fill="#3c3c3c"/><rect x="0" y="16.5" width="18" height="1" fill="#3c3c3c"/><rect x="5" y="2" width="8" height="4" fill="#3c3c3c"/><rect x="3" y="10.5" width="12" height="5" fill="#3c3c3c"/></svg>
<svg class="a" style="left:1712px;top:953px;" width="18" height="18" viewBox="0 0 18 18"><rect x="0.5" y="0" width="1" height="18" fill="#3c3c3c"/><rect x="10.5" y="0" width="1" height="18" fill="#3c3c3c"/><rect x="3" y="3" width="5" height="12" fill="#3c3c3c"/><rect x="13" y="5.5" width="4" height="7" fill="#3c3c3c"/></svg>
<svg class="a" style="left:1746px;top:953px;" width="18" height="18" viewBox="0 0 18 18"><rect x="4" y="0" width="1" height="18" fill="#3c3c3c"/><rect x="13" y="0" width="1" height="18" fill="#3c3c3c"/><rect x="2" y="3" width="5" height="12" fill="#3c3c3c"/><rect x="11.5" y="5.5" width="4" height="7" fill="#3c3c3c"/></svg>
<svg class="a" style="left:1780px;top:953px;" width="18" height="18" viewBox="0 0 18 18"><rect x="6.5" y="0" width="1" height="18" fill="#3c3c3c"/><rect x="16.5" y="0" width="1" height="18" fill="#3c3c3c"/><rect x="1" y="3" width="5" height="12" fill="#3c3c3c"/><rect x="11.5" y="5.5" width="4" height="7" fill="#3c3c3c"/></svg>
<div class="a" style="left:1599px;top:981px;width:300px;height:2px;background:#1a1a1a;"></div>
<div class="t" style="left:1612px;top:992px;font-size:12px;line-height:12px;color:#b8b8b8;transform:scaleX(0.9445);">Audio</div>
<div class="a" style="left:1599px;top:1011px;width:300px;height:2px;background:#161616;"></div>
<div class="a" style="left:8px;top:636px;width:1586px;height:389px;background:#232323;border-radius:0 0 0 8px;"></div>
<div class="a" style="left:11px;top:637px;width:132px;height:25px;border:3px solid #aadc14;"></div>
<svg class="a" style="left:20px;top:648px;" width="6" height="6" viewBox="0 0 6 6"><path d="M0.5 0.5L5.5 5.5M5.5 0.5L0.5 5.5" stroke="#8a8a8a" stroke-width="1"/></svg>
<div class="a" style="left:35px;top:645px;width:10px;height:10px;background:#b39c77;"></div>
<div class="t" style="left:57px;top:645px;font-size:11.5px;line-height:11.5px;color:#d8d8d8;transform:scaleX(0.9692);">Main Comp</div>
<div class="a" style="left:126px;top:647px;width:8px;height:1px;background:#c8c8c8;"></div>
<div class="a" style="left:126px;top:650px;width:8px;height:1px;background:#c8c8c8;"></div>
<div class="a" style="left:126px;top:653px;width:8px;height:1px;background:#c8c8c8;"></div>
<div class="a" style="left:170px;top:645px;width:10px;height:10px;background:#b39c77;"></div>
<div class="t" style="left:192px;top:645px;font-size:11.5px;line-height:11.5px;color:#9a9a9a;transform:scaleX(0.9488);">Wide Comp</div>
<div class="t" style="left:25px;top:668px;font-size:14px;line-height:14px;color:#2d8ceb;font-weight:bold;transform:scaleX(1.0803);">0:00:00:00</div>
<div class="t" style="left:20px;top:685px;font-size:11px;line-height:11px;color:#2a6cb4;transform:scaleX(0.9393);">00000 (30.00 fps)</div>
<div class="a" style="left:116px;top:672px;width:259px;height:19px;background:#161616;border-radius:3px;border:1px solid #303030;"></div>
<svg class="a" style="left:123px;top:676px;" width="17" height="11" viewBox="0 0 17 11"><circle cx="7.2" cy="4.2" r="3.3" fill="none" stroke="#b4b4b4" stroke-width="1.2"/><path d="M4.8 6.6L0.8 10.4" stroke="#b4b4b4" stroke-width="1.5"/><path d="M11.5 7H16.5L14 9.6Z" fill="#b4b4b4"/></svg>
<svg class="a" style="left:389px;top:675px;" width="19" height="14" viewBox="0 0 19 14"><path d="M0.800 2.500H11.800M9 2.500V7.800H11.800" fill="none" stroke="#b4b4b4" stroke-width="1.100"/><rect x="3" y="1" width="4.600" height="3" rx="1.200" fill="#b4b4b4"/><rect x="11.800" y="0.800" width="4.400" height="3.400" rx="0.800" fill="#b4b4b4"/><rect x="11.800" y="6.200" width="4.400" height="3.200" rx="0.800" fill="#b4b4b4"/><path d="M14 10.800H18L16 13.300Z" fill="#b4b4b4"/></svg>
<svg class="a" style="left:424px;top:674px;" width="16" height="13" viewBox="0 0 16 13"><rect x="0.300" y="7.800" width="15.600" height="5.200" fill="#767676"/><path d="M3.800 6A4.300 4.300 0 0 1 12.400 6Z" fill="#b4b4b4"/><circle cx="6.400" cy="4" r="0.900" fill="#232323"/><circle cx="9.800" cy="4" r="0.900" fill="#232323"/><rect x="1" y="5.500" width="14.200" height="1.400" fill="#b4b4b4"/><rect x="7" y="4.500" width="2.200" height="6.500" fill="#b4b4b4"/></svg>
<svg class="a" style="left:450px;top:673px;" width="15" height="15" viewBox="0 0 15 15"><rect x="5" y="0.800" width="10" height="11.800" fill="#b4b4b4"/><rect x="8.400" y="6" width="3.200" height="1.100" fill="#232323"/><path d="M0.800 4V14.600H10.400V13" fill="none" stroke="#b4b4b4" stroke-width="1.300"/><rect x="6" y="1.8" width="1.100" height="1.200" fill="#232323"/><rect x="12.900" y="1.8" width="1.100" height="1.200" fill="#232323"/><rect x="6" y="4.0" width="1.100" height="1.200" fill="#232323"/><rect x="12.900" y="4.0" width="1.100" height="1.200" fill="#232323"/><rect x="6" y="6.2" width="1.100" height="1.200" fill="#232323"/><rect x="12.900" y="6.2" width="1.100" height="1.200" fill="#232323"/><rect x="6" y="8.4" width="1.100" height="1.200" fill="#232323"/><rect x="12.900" y="8.4" width="1.100" height="1.200" fill="#232323"/><rect x="6" y="10.600000000000001" width="1.100" height="1.200" fill="#232323"/><rect x="12.900" y="10.600000000000001" width="1.100" height="1.200" fill="#232323"/><rect x="2.300" y="5.4" width="1.100" height="1.100" fill="#b4b4b4"/><rect x="2.300" y="7.6000000000000005" width="1.100" height="1.100" fill="#b4b4b4"/><rect x="2.300" y="9.8" width="1.100" height="1.100" fill="#b4b4b4"/><rect x="2.300" y="12.0" width="1.100" height="1.100" fill="#b4b4b4"/></svg>
<svg class="a" style="left:476px;top:673px;" width="16" height="16" viewBox="0 0 16 16"><circle cx="6.300" cy="9.700" r="4.800" fill="#232323" stroke="#b4b4b4" stroke-width="1.200"/><circle cx="8.200" cy="7.600" r="4.800" fill="#232323" stroke="#b4b4b4" stroke-width="1.200"/><circle cx="10.200" cy="5.600" r="4.800" fill="#6e6e6e" stroke="#b4b4b4" stroke-width="1.300"/></svg>
<svg class="a" style="left:510px;top:672px;" width="17" height="17" viewBox="0 0 17 17"><rect x="1.800" y="3.200" width="14.200" height="12.600" fill="none" stroke="#b4b4b4" stroke-width="1.400"/><path d="M3.600 0.800V3M7.200 0.800V3M10.800 0.800V3M14.200 0.800V3M0.200 6.300H1.800M0.200 9.800H1.800M0.200 13.200H1.800" stroke="#b4b4b4" stroke-width="1.100"/><path d="M4 6.300C9.500 6.300 8.500 12.600 14 12.600" fill="none" stroke="#b4b4b4" stroke-width="1.200"/></svg>
<svg class="a" style="left:15px;top:706px;" width="12" height="8" viewBox="0 0 12 8"><path d="M0.3 4C2.7 0.2 9.3 0.2 11.7 4C9.3 7.8 2.7 7.8 0.3 4Z" fill="#d0d0d0"/><circle cx="6" cy="4" r="2.5" fill="#232323"/><circle cx="6" cy="4" r="1.2" fill="#d0d0d0"/></svg>
<svg class="a" style="left:30px;top:704px;" width="12" height="12" viewBox="0 0 12 12"><path d="M0 4H3L7 0.500V11.500L3 8H0Z" fill="#b4b4b4"/><path d="M8.5 3.500A3.500 3.500 0 0 1 8.5 8.500M9.500 1.500A5.500 5.500 0 0 1 9.500 10.500" fill="none" stroke="#b4b4b4" stroke-width="1"/></svg>
<svg class="a" style="left:47px;top:706px;" width="8" height="8" viewBox="0 0 8 8"><circle cx="4" cy="4" r="3.600" fill="#b4b4b4"/></svg>
<svg class="a" style="left:60px;top:704px;" width="11" height="10" viewBox="0 0 11 10"><rect x="0.500" y="4" width="10" height="6" rx="0.800" fill="#b4b4b4"/><path d="M2.900 4V2.900A2.600 2.600 0 0 1 8.100 2.900V4" fill="none" stroke="#b4b4b4" stroke-width="1.400"/><circle cx="5.500" cy="6.300" r="0.900" fill="#232323"/><rect x="5" y="6.500" width="1" height="2.200" fill="#232323"/></svg>
<svg class="a" style="left:91px;top:704px;" width="13" height="13" viewBox="0 0 13 13"><path d="M0.5 1.500L5.500 0.500L12.500 7.500L7 12.500L0.500 6Z" fill="#a8a8a8"/><circle cx="3.300" cy="3.300" r="1.100" fill="#232323"/></svg>
<div class="a" style="left:77px;top:705px;width:1px;height:11px;background:#111;"></div>
<div class="a" style="left:109px;top:705px;width:1px;height:11px;background:#111;"></div>
<div class="a" style="left:142px;top:705px;width:1px;height:11px;background:#111;"></div>
<div class="a" style="left:272px;top:705px;width:1px;height:11px;background:#111;"></div>
<div class="a" style="left:408px;top:705px;width:1px;height:11px;background:#111;"></div>
<div class="a" style="left:526px;top:705px;width:1px;height:11px;background:#111;"></div>
<div class="t" style="left:115px;top:706px;font-size:9px;line-height:9px;color:#b2b2b2;transform:scaleX(0.9);">#</div>
<div class="t" style="left:148px;top:704px;font-size:10.5px;line-height:10.5px;color:#b2b2b2;transform:scaleX(0.8411);">Source Name</div>
<svg class="a" style="left:277px;top:705px;" width="13" height="10" viewBox="0 0 13 10"><path d="M2.200 6A4.300 4.300 0 0 1 10.800 6" fill="none" stroke="#b4b4b4" stroke-width="1.200"/><circle cx="4.700" cy="4.200" r="0.750" fill="#b4b4b4"/><circle cx="8.300" cy="4.200" r="0.750" fill="#b4b4b4"/><path d="M6.500 1.800V9.600" stroke="#b4b4b4" stroke-width="1.100"/><path d="M0 6.600H13" stroke="#b4b4b4" stroke-width="1.200"/><path d="M4.200 6.600V9M8.800 6.600V9" stroke="#b4b4b4" stroke-width="1"/></svg>
<svg class="a" style="left:293px;top:705px;" width="11" height="11" viewBox="0 0 11 11"><circle cx="5.5" cy="5.5" r="2" fill="none" stroke="#b4b4b4" stroke-width="1.1"/><path d="M5.5 0V2.5M5.5 8.5V11M0 5.5H2.5M8.5 5.5H11M1.6 1.6L3.3 3.3M7.7 7.7L9.4 9.4M9.4 1.6L7.7 3.3M3.3 7.7L1.6 9.4" stroke="#b4b4b4" stroke-width="1"/></svg>
<svg class="a" style="left:308px;top:705px;" width="11" height="10" viewBox="0 0 11 10"><path d="M0.5 0.500L3 3M4 4L6 6M7 7L10.500 10.500" stroke="#b4b4b4" stroke-width="1.300" stroke-dasharray="2.500 1.200"/></svg>
<div class="t" style="left:323px;top:704px;font-size:12px;line-height:12px;color:#b4b4b4;transform:scaleX(0.95);font-style:italic;">fx</div>
<svg class="a" style="left:337px;top:705px;" width="12" height="11" viewBox="0 0 12 11"><rect x="0" y="0" width="12" height="11" fill="#b4b4b4"/><rect x="2.500" y="2" width="7" height="7" fill="#555"/><path d="M1 1.500H2M1 4H2M1 6.500H2M1 9H2M10 1.500H11M10 4H11M10 6.500H11M10 9H11" stroke="#232323" stroke-width="1"/></svg>
<svg class="a" style="left:352px;top:704px;" width="13" height="12" viewBox="0 0 13 12"><circle cx="8" cy="4.500" r="4.300" fill="#b4b4b4"/><circle cx="6.500" cy="6" r="4.300" fill="#777" stroke="#232323" stroke-width="0.700"/><circle cx="4.800" cy="7.500" r="4" fill="none" stroke="#b4b4b4" stroke-width="1"/></svg>
<svg class="a" style="left:368px;top:705px;" width="11" height="11" viewBox="0 0 11 11"><circle cx="5.500" cy="5.500" r="5" fill="#b4b4b4"/><path d="M5.500 0.500A5 5 0 0 0 2 9L9 2A5 5 0 0 0 5.500 0.500Z" fill="#232323"/></svg>
<svg class="a" style="left:383px;top:705px;" width="11" height="11" viewBox="0 0 11 11"><path d="M5.500 0.500L10.300 3V8L5.500 10.500L0.700 8V3Z M0.700 3L5.500 5.500L10.300 3M5.500 5.500V10.500" fill="none" stroke="#b4b4b4" stroke-width="1"/></svg>
<div class="t" style="left:415px;top:704px;font-size:10.5px;line-height:10.5px;color:#b2b2b2;transform:scaleX(0.8565);">Parent &amp; Link</div>
<div class="a" style="left:10px;top:719px;width:532px;height:16px;background:#3e3e3e;"></div>
<div class="a" style="left:14px;top:720px;width:13px;height:14px;background:#383838;"></div>
<svg class="a" style="left:15px;top:723px;" width="12" height="8" viewBox="0 0 12 8"><path d="M0.3 4C2.7 0.2 9.3 0.2 11.7 4C9.3 7.8 2.7 7.8 0.3 4Z" fill="#d0d0d0"/><circle cx="6" cy="4" r="2.5" fill="#383838"/><circle cx="6" cy="4" r="1.2" fill="#d0d0d0"/></svg>
<div class="a" style="left:44px;top:720px;width:13px;height:14px;background:#2e2e2e;"></div>
<div class="a" style="left:59px;top:720px;width:13px;height:14px;background:#2e2e2e;"></div>
<svg class="a" style="left:84px;top:725px;" width="8" height="5" viewBox="0 0 8 5"><path d="M0.6 0.6L4 4L7.4 0.6" fill="none" stroke="#b4b4b4" stroke-width="1.2"/></svg>
<div class="a" style="left:95px;top:721px;width:12px;height:12px;background:#6f7ce4;"></div>
<div class="t" style="left:117px;top:720px;font-size:12px;line-height:12px;color:#d8d8d8;transform:scaleX(0.95);">1</div>
<svg class="a" style="left:146px;top:721px;" width="12" height="11" viewBox="0 0 12 11"><path d="M6 0.300L7.700 3.900L11.700 4.300L8.700 7L9.600 10.800L6 8.800L2.400 10.800L3.300 7L0.300 4.300L4.300 3.900Z" fill="#d0d0d0"/></svg>
<div class="a" style="left:161px;top:719px;width:111px;height:16px;background:#4c4c4c;border:1.5px solid #b0b0b0;"></div>
<div class="t" style="left:165px;top:721px;font-size:12px;line-height:12px;color:#c8c8c8;transform:scaleX(0.9095);">Shape Layer 1</div>
<div class="a" style="left:277px;top:720px;width:13px;height:14px;background:#363636;"></div>
<div class="a" style="left:307px;top:720px;width:13px;height:14px;background:#363636;"></div>
<svg class="a" style="left:277px;top:722px;" width="13" height="10" viewBox="0 0 13 10"><path d="M2.200 6A4.300 4.300 0 0 1 10.800 6" fill="none" stroke="#b4b4b4" stroke-width="1.200"/><circle cx="4.700" cy="4.200" r="0.750" fill="#b4b4b4"/><circle cx="8.300" cy="4.200" r="0.750" fill="#b4b4b4"/><path d="M6.500 1.800V9.600" stroke="#b4b4b4" stroke-width="1.100"/><path d="M0 6.600H13" stroke="#b4b4b4" stroke-width="1.200"/><path d="M4.200 6.600V9M8.800 6.600V9" stroke="#b4b4b4" stroke-width="1"/></svg>
<div class="a" style="left:292px;top:720px;width:13px;height:14px;background:#2e2e2e;"></div>
<svg class="a" style="left:293px;top:721.5px;" width="11" height="11" viewBox="0 0 11 11"><circle cx="5.5" cy="5.5" r="2" fill="none" stroke="#5a5a5a" stroke-width="1.1"/><path d="M5.5 0V2.5M5.5 8.5V11M0 5.5H2.5M8.5 5.5H11M1.6 1.6L3.3 3.3M7.7 7.7L9.4 9.4M9.4 1.6L7.7 3.3M3.3 7.7L1.6 9.4" stroke="#5a5a5a" stroke-width="1"/></svg>
<svg class="a" style="left:308px;top:722px;" width="11" height="10" viewBox="0 0 11 10"><path d="M0.5 9.5L10.5 0.5" stroke="#b4b4b4" stroke-width="1.2"/></svg>
<div class="a" style="left:352px;top:720px;width:13px;height:14px;background:#2e2e2e;"></div>
<div class="a" style="left:367px;top:720px;width:12px;height:14px;background:#2e2e2e;"></div>
<div class="a" style="left:382px;top:720px;width:12px;height:14px;background:#2e2e2e;"></div>
<svg class="a" style="left:414px;top:721px;" width="13" height="13" viewBox="0 0 13 13"><path d="M5.59 6.64L5.45 6.75L5.33 6.90L5.24 7.08L5.19 7.30L5.19 7.53L5.23 7.78L5.33 8.02L5.49 8.25L5.70 8.46L5.95 8.63L6.25 8.75L6.59 8.82L6.94 8.82L7.31 8.74L7.66 8.60L8.00 8.38L8.30 8.08L8.54 7.73L8.73 7.32L8.83 6.87L8.85 6.39L8.77 5.90L8.60 5.42L8.34 4.96L7.98 4.56L7.54 4.21L7.03 3.95L6.47 3.78L5.87 3.72L5.25 3.77L4.64 3.94L4.05 4.22L3.52 4.62L3.06 5.13L2.69 5.72L2.43 6.39L2.29 7.10L2.30 7.85L2.44 8.60L2.72 9.32L3.14 10.00L3.69 10.59L4.35 11.09L5.11 11.46L5.93 11.69L6.80 11.76L7.68 11.67L8.55 11.42L9.37 11.00L10.11 10.43L10.75 9.73L11.25 8.90L11.60 7.98L11.78 7.00L11.77 5.99L11.58 4.97L11.19 4.00L10.63 3.10L9.90 2.31L9.02 1.65" fill="none" stroke="#b4b4b4" stroke-width="1.1"/></svg>
<div class="a" style="left:433px;top:720px;width:89px;height:14px;background:#232323;"></div>
<div class="t" style="left:440px;top:721px;font-size:12px;line-height:12px;color:#d8d8d8;transform:scaleX(0.9063);">None</div>
<svg class="a" style="left:509px;top:725px;" width="8" height="5" viewBox="0 0 8 5"><path d="M0.6 0.6L4 4L7.4 0.6" fill="none" stroke="#d0d0d0" stroke-width="1.2"/></svg>
<div class="a" style="left:10px;top:735px;width:532px;height:1px;background:#1b1b1b;"></div>
<svg class="a" style="left:101px;top:743px;" width="8" height="5" viewBox="0 0 8 5"><path d="M0.6 0.6L4 4L7.4 0.6" fill="none" stroke="#b4b4b4" stroke-width="1.2"/></svg>
<div class="t" style="left:117px;top:739px;font-size:12px;line-height:12px;color:#b2b2b2;transform:scaleX(0.8953);">Contents</div>
<div class="t" style="left:366px;top:739px;font-size:12px;line-height:12px;color:#b2b2b2;transform:scaleX(0.8506);">Add:</div>
<svg class="a" style="left:393px;top:738px;" width="12" height="12" viewBox="0 0 12 12"><circle cx="6" cy="6" r="6" fill="#d0d0d0"/><path d="M4.500 3L9 6L4.500 9Z" fill="#232323"/></svg>
<div class="a" style="left:10px;top:752px;width:532px;height:1px;background:#1b1b1b;"></div>
<div class="a" style="left:14px;top:754px;width:14px;height:14px;background:#1b1b1b;"></div>
<svg class="a" style="left:15px;top:757px;" width="12" height="8" viewBox="0 0 12 8"><path d="M0.3 4C2.7 0.2 9.3 0.2 11.7 4C9.3 7.8 2.7 7.8 0.3 4Z" fill="#d0d0d0"/><circle cx="6" cy="4" r="2.5" fill="#1b1b1b"/><circle cx="6" cy="4" r="1.2" fill="#d0d0d0"/></svg>
<svg class="a" style="left:118px;top:757px;" width="5" height="8" viewBox="0 0 5 8"><path d="M0.6 0.6L4 4L0.6 7.4" fill="none" stroke="#b4b4b4" stroke-width="1.2"/></svg>
<div class="a" style="left:130px;top:753px;width:142px;height:16px;background:#484848;"></div>
<div class="t" style="left:134px;top:756px;font-size:12px;line-height:12px;color:#b2b2b2;transform:scaleX(0.9056);">Rectangle 1</div>
<div class="a" style="left:277px;top:753px;width:128px;height:16px;background:#1d1d1d;border:1px solid #2e2e2e;border-radius:2px;"></div>
<div class="t" style="left:285px;top:755px;font-size:12px;line-height:12px;color:#d8d8d8;transform:scaleX(0.9568);">Normal</div>
<svg class="a" style="left:392px;top:759px;" width="8" height="5" viewBox="0 0 8 5"><path d="M0.6 0.6L4 4L7.4 0.6" fill="none" stroke="#d0d0d0" stroke-width="1.2"/></svg>
<div class="a" style="left:10px;top:769px;width:532px;height:1px;background:#1b1b1b;"></div>
<svg class="a" style="left:101px;top:774px;" width="5" height="8" viewBox="0 0 5 8"><path d="M0.6 0.6L4 4L0.6 7.4" fill="none" stroke="#b4b4b4" stroke-width="1.2"/></svg>
<div class="t" style="left:117px;top:773px;font-size:12px;line-height:12px;color:#b2b2b2;transform:scaleX(0.9035);">Transform</div>
<div class="t" style="left:278px;top:772px;font-size:12px;line-height:12px;color:#2d8ceb;transform:scaleX(0.8610);">Reset</div>
<div class="a" style="left:10px;top:786px;width:532px;height:1px;background:#1b1b1b;"></div>
<div class="a" style="left:10px;top:787px;width:532px;height:16px;background:#2b2b2b;"></div>
<div class="a" style="left:14px;top:788px;width:13px;height:13px;background:#1e1e1e;"></div>
<svg class="a" style="left:15px;top:791px;" width="12" height="8" viewBox="0 0 12 8"><path d="M0.3 4C2.7 0.2 9.3 0.2 11.7 4C9.3 7.8 2.7 7.8 0.3 4Z" fill="#d0d0d0"/><circle cx="6" cy="4" r="2.5" fill="#1e1e1e"/><circle cx="6" cy="4" r="1.2" fill="#d0d0d0"/></svg>
<div class="a" style="left:44px;top:788px;width:13px;height:14px;background:#232323;"></div>
<div class="a" style="left:59px;top:788px;width:13px;height:14px;background:#232323;"></div>
<svg class="a" style="left:84px;top:793px;" width="8" height="5" viewBox="0 0 8 5"><path d="M0.6 0.6L4 4L7.4 0.6" fill="none" stroke="#b4b4b4" stroke-width="1.2"/></svg>
<div class="a" style="left:95px;top:789px;width:12px;height:12px;background:#b39c77;"></div>
<div class="t" style="left:117px;top:788px;font-size:12px;line-height:12px;color:#d8d8d8;transform:scaleX(0.95);">2</div>
<svg class="a" style="left:144px;top:788px;" width="17" height="14" viewBox="0 0 17 14"><rect x="0.5" y="0.5" width="16" height="13" fill="#2a2a2a" stroke="#c8c8c8" stroke-width="1"/><rect x="0" y="1.2" width="2.2" height="1.6" fill="#c8c8c8"/><rect x="14.8" y="1.2" width="2.2" height="1.6" fill="#c8c8c8"/><rect x="0" y="4.4" width="2.2" height="1.6" fill="#c8c8c8"/><rect x="14.8" y="4.4" width="2.2" height="1.6" fill="#c8c8c8"/><rect x="0" y="7.6000000000000005" width="2.2" height="1.6" fill="#c8c8c8"/><rect x="14.8" y="7.6000000000000005" width="2.2" height="1.6" fill="#c8c8c8"/><rect x="0" y="10.8" width="2.2" height="1.6" fill="#c8c8c8"/><rect x="14.8" y="10.8" width="2.2" height="1.6" fill="#c8c8c8"/><rect x="3.2" y="1.8" width="10.6" height="10.4" fill="#868686"/><path d="M8.2 4H12.6L11.6 8.4H7.2Z" fill="#e23030"/><path d="M4.6 11L7.8 6.2L11 11Z" fill="#1fa83a"/><circle cx="6.2" cy="4.6" r="1.9" fill="#2f86ee"/></svg>
<div class="t" style="left:165px;top:789px;font-size:12px;line-height:12px;color:#d8d8d8;transform:scaleX(0.9412);">Wide Comp</div>
<div class="a" style="left:277px;top:788px;width:13px;height:14px;background:#252525;"></div>
<div class="a" style="left:292px;top:788px;width:13px;height:14px;background:#232323;"></div>
<div class="a" style="left:307px;top:788px;width:13px;height:14px;background:#252525;"></div>
<div class="a" style="left:322px;top:788px;width:13px;height:14px;background:#252525;"></div>
<svg class="a" style="left:277px;top:790px;" width="13" height="10" viewBox="0 0 13 10"><path d="M2.200 6A4.300 4.300 0 0 1 10.800 6" fill="none" stroke="#b4b4b4" stroke-width="1.200"/><circle cx="4.700" cy="4.200" r="0.750" fill="#b4b4b4"/><circle cx="8.300" cy="4.200" r="0.750" fill="#b4b4b4"/><path d="M6.500 1.800V9.600" stroke="#b4b4b4" stroke-width="1.100"/><path d="M0 6.600H13" stroke="#b4b4b4" stroke-width="1.200"/><path d="M4.200 6.600V9M8.800 6.600V9" stroke="#b4b4b4" stroke-width="1"/></svg>
<svg class="a" style="left:308px;top:790px;" width="11" height="10" viewBox="0 0 11 10"><path d="M0.5 9.5L10.5 0.5" stroke="#b4b4b4" stroke-width="1.2"/></svg>
<div class="t" style="left:323px;top:790px;font-size:12px;line-height:12px;color:#b4b4b4;transform:scaleX(0.95);font-style:italic;">fx</div>
<div class="a" style="left:352px;top:788px;width:13px;height:14px;background:#232323;"></div>
<div class="a" style="left:367px;top:788px;width:12px;height:14px;background:#232323;"></div>
<div class="a" style="left:382px;top:788px;width:12px;height:14px;background:#232323;"></div>
<svg class="a" style="left:414px;top:789px;" width="13" height="13" viewBox="0 0 13 13"><path d="M5.59 6.64L5.45 6.75L5.33 6.90L5.24 7.08L5.19 7.30L5.19 7.53L5.23 7.78L5.33 8.02L5.49 8.25L5.70 8.46L5.95 8.63L6.25 8.75L6.59 8.82L6.94 8.82L7.31 8.74L7.66 8.60L8.00 8.38L8.30 8.08L8.54 7.73L8.73 7.32L8.83 6.87L8.85 6.39L8.77 5.90L8.60 5.42L8.34 4.96L7.98 4.56L7.54 4.21L7.03 3.95L6.47 3.78L5.87 3.72L5.25 3.77L4.64 3.94L4.05 4.22L3.52 4.62L3.06 5.13L2.69 5.72L2.43 6.39L2.29 7.10L2.30 7.85L2.44 8.60L2.72 9.32L3.14 10.00L3.69 10.59L4.35 11.09L5.11 11.46L5.93 11.69L6.80 11.76L7.68 11.67L8.55 11.42L9.37 11.00L10.11 10.43L10.75 9.73L11.25 8.90L11.60 7.98L11.78 7.00L11.77 5.99L11.58 4.97L11.19 4.00L10.63 3.10L9.90 2.31L9.02 1.65" fill="none" stroke="#b4b4b4" stroke-width="1.1"/></svg>
<div class="a" style="left:433px;top:788px;width:89px;height:14px;background:#232323;"></div>
<div class="t" style="left:440px;top:789px;font-size:12px;line-height:12px;color:#d8d8d8;transform:scaleX(0.9063);">None</div>
<svg class="a" style="left:509px;top:793px;" width="8" height="5" viewBox="0 0 8 5"><path d="M0.6 0.6L4 4L7.4 0.6" fill="none" stroke="#d0d0d0" stroke-width="1.2"/></svg>
<div class="a" style="left:10px;top:803px;width:532px;height:1px;background:#1b1b1b;"></div>
<svg class="a" style="left:101px;top:808px;" width="5" height="8" viewBox="0 0 5 8"><path d="M0.6 0.6L4 4L0.6 7.4" fill="none" stroke="#b4b4b4" stroke-width="1.2"/></svg>
<div class="t" style="left:117px;top:807px;font-size:12px;line-height:12px;color:#b2b2b2;transform:scaleX(0.8775);">Effects</div>
<div class="a" style="left:10px;top:820px;width:532px;height:1px;background:#1b1b1b;"></div>
<svg class="a" style="left:101px;top:825px;" width="5" height="8" viewBox="0 0 5 8"><path d="M0.6 0.6L4 4L0.6 7.4" fill="none" stroke="#b4b4b4" stroke-width="1.2"/></svg>
<div class="t" style="left:117px;top:824px;font-size:12px;line-height:12px;color:#b2b2b2;transform:scaleX(0.9035);">Transform</div>
<div class="t" style="left:278px;top:823px;font-size:12px;line-height:12px;color:#2d8ceb;transform:scaleX(0.8610);">Reset</div>
<div class="a" style="left:10px;top:837px;width:532px;height:1px;background:#1b1b1b;"></div>
<div class="a" style="left:542px;top:699px;width:1px;height:306px;background:#000;"></div>
<div class="a" style="left:544px;top:664px;width:1050px;height:55px;background:#232323;"></div>
<div class="a" style="left:543px;top:669px;width:1035px;height:10px;background:#0a0a0a;border-radius:5px 0 0 5px;"></div>
<div class="a" style="left:550px;top:670px;width:1020px;height:8px;background:#6a6a6a;"></div>
<div class="a" style="left:543px;top:670px;width:7px;height:8px;background:#2d8ceb;border-radius:4px 0 0 4px;"></div>
<div class="a" style="left:1570px;top:670px;width:1px;height:8px;background:#0a0a0a;"></div>
<div class="a" style="left:1571px;top:670px;width:6px;height:8px;background:#2d8ceb;border-radius:0 5px 5px 0;"></div>
<div class="a" style="left:545px;top:679px;width:1032px;height:19px;background:#1c1c1c;"></div>
<div class="a" style="left:545px;top:698px;width:1032px;height:1px;background:#0a0a0a;"></div>
<div class="t" style="left:549.5px;top:681px;font-size:11px;line-height:11px;color:#b8b8b8;transform:scaleX(1.0133);">00f</div>
<div class="a" style="left:607px;top:693px;width:1px;height:5px;background:#9a9a9a;"></div>
<div class="t" style="left:598.6px;top:681px;font-size:11px;line-height:11px;color:#b8b8b8;transform:scaleX(1.0133);">10f</div>
<div class="a" style="left:665px;top:693px;width:1px;height:5px;background:#9a9a9a;"></div>
<div class="t" style="left:655.6px;top:681px;font-size:11px;line-height:11px;color:#b8b8b8;transform:scaleX(1.0460);">20f</div>
<div class="a" style="left:722px;top:693px;width:1px;height:5px;background:#9a9a9a;"></div>
<div class="t" style="left:705.7px;top:681px;font-size:11px;line-height:11px;color:#b8b8b8;transform:scaleX(0.9969);">01:00f</div>
<div class="a" style="left:779px;top:693px;width:1px;height:5px;background:#9a9a9a;"></div>
<div class="t" style="left:770.5px;top:681px;font-size:11px;line-height:11px;color:#b8b8b8;transform:scaleX(1.0133);">10f</div>
<div class="a" style="left:837px;top:693px;width:1px;height:5px;background:#9a9a9a;"></div>
<div class="t" style="left:827.5px;top:681px;font-size:11px;line-height:11px;color:#b8b8b8;transform:scaleX(1.0460);">20f</div>
<div class="a" style="left:894px;top:693px;width:1px;height:5px;background:#9a9a9a;"></div>
<div class="t" style="left:877.6px;top:681px;font-size:11px;line-height:11px;color:#b8b8b8;transform:scaleX(0.9969);">02:00f</div>
<div class="a" style="left:951px;top:693px;width:1px;height:5px;background:#9a9a9a;"></div>
<div class="t" style="left:942.4px;top:681px;font-size:11px;line-height:11px;color:#b8b8b8;transform:scaleX(1.0133);">10f</div>
<div class="a" style="left:1008px;top:693px;width:1px;height:5px;background:#9a9a9a;"></div>
<div class="t" style="left:999.5px;top:681px;font-size:11px;line-height:11px;color:#b8b8b8;transform:scaleX(1.0460);">20f</div>
<div class="a" style="left:1066px;top:693px;width:1px;height:5px;background:#9a9a9a;"></div>
<div class="t" style="left:1049.5px;top:681px;font-size:11px;line-height:11px;color:#b8b8b8;transform:scaleX(0.9969);">03:00f</div>
<div class="a" style="left:1123px;top:693px;width:1px;height:5px;background:#9a9a9a;"></div>
<div class="t" style="left:1114.3px;top:681px;font-size:11px;line-height:11px;color:#b8b8b8;transform:scaleX(1.0133);">10f</div>
<div class="a" style="left:1180px;top:693px;width:1px;height:5px;background:#9a9a9a;"></div>
<div class="t" style="left:1171.4px;top:681px;font-size:11px;line-height:11px;color:#b8b8b8;transform:scaleX(1.0460);">20f</div>
<div class="a" style="left:1238px;top:693px;width:1px;height:5px;background:#9a9a9a;"></div>
<div class="t" style="left:1221.5px;top:681px;font-size:11px;line-height:11px;color:#b8b8b8;transform:scaleX(0.9969);">04:00f</div>
<div class="a" style="left:1295px;top:693px;width:1px;height:5px;background:#9a9a9a;"></div>
<div class="t" style="left:1286.3px;top:681px;font-size:11px;line-height:11px;color:#b8b8b8;transform:scaleX(1.0133);">10f</div>
<div class="a" style="left:1352px;top:693px;width:1px;height:5px;background:#9a9a9a;"></div>
<div class="t" style="left:1343.3px;top:681px;font-size:11px;line-height:11px;color:#b8b8b8;transform:scaleX(1.0460);">20f</div>
<div class="a" style="left:1410px;top:693px;width:1px;height:5px;background:#9a9a9a;"></div>
<div class="t" style="left:1393.4px;top:681px;font-size:11px;line-height:11px;color:#b8b8b8;transform:scaleX(0.9969);">05:00f</div>
<div class="a" style="left:1467px;top:693px;width:1px;height:5px;background:#9a9a9a;"></div>
<div class="t" style="left:1458.2px;top:681px;font-size:11px;line-height:11px;color:#b8b8b8;transform:scaleX(1.0133);">10f</div>
<div class="a" style="left:1524px;top:693px;width:1px;height:5px;background:#9a9a9a;"></div>
<div class="t" style="left:1515.3px;top:681px;font-size:11px;line-height:11px;color:#b8b8b8;transform:scaleX(1.0460);">20f</div>
<div class="t" style="left:1565.5px;top:681px;font-size:11px;line-height:11px;color:#b8b8b8;transform:scaleX(0.8980);">06</div>
<div class="a" style="left:550px;top:699px;width:1020px;height:15px;background:#676767;"></div>
<div class="a" style="left:544px;top:699px;width:6px;height:15px;background:#2d8ceb;border-radius:4px 0 0 4px;"></div>
<div class="a" style="left:1570px;top:699px;width:1px;height:15px;background:#0a0a0a;"></div>
<div class="a" style="left:1571px;top:699px;width:5px;height:15px;background:#2d8ceb;border-radius:0 4px 4px 0;"></div>
<div class="a" style="left:551px;top:715px;width:1019px;height:4px;background:#1cc31c;"></div>
<div class="a" style="left:551px;top:714px;width:1019px;height:1px;background:#2c4a2c;"></div>
<div class="a" style="left:545px;top:718px;width:1032px;height:1px;background:#3c3c3c;"></div>
<div class="a" style="left:551px;top:719px;width:1019px;height:286px;background:#333333;"></div>
<div class="a" style="left:543px;top:719px;width:8px;height:286px;background:#2b2b2b;"></div>
<div class="a" style="left:1570px;top:719px;width:7px;height:286px;background:#3a3a3a;"></div>
<div class="a" style="left:543px;top:719px;width:8px;height:16px;background:#4a4a4a;"></div>
<div class="a" style="left:543px;top:735px;width:1034px;height:1px;background:#262626;"></div>
<div class="a" style="left:543px;top:752px;width:1034px;height:1px;background:#262626;"></div>
<div class="a" style="left:543px;top:769px;width:1034px;height:1px;background:#262626;"></div>
<div class="a" style="left:543px;top:786px;width:1034px;height:1px;background:#262626;"></div>
<div class="a" style="left:543px;top:803px;width:1034px;height:1px;background:#262626;"></div>
<div class="a" style="left:543px;top:820px;width:1034px;height:1px;background:#262626;"></div>
<div class="a" style="left:543px;top:837px;width:1034px;height:1px;background:#262626;"></div>
<div class="a" style="left:551px;top:719px;width:1019px;height:16px;background:linear-gradient(180deg,#8a9aee 0,#6d7fe0 12%,#5b6cd2 55%,#4655b8 100%);"></div>
<div class="a" style="left:551px;top:787px;width:1019px;height:16px;background:#736a5a;border-radius:5px 0 0 0;"></div>
<svg class="a" style="left:1564px;top:788px;" width="5" height="5" viewBox="0 0 5 5"><path d="M0 0H5V5C5 2 3 0 0 0Z" fill="#4a4438"/></svg>
<svg class="a" style="left:1581px;top:701px;" width="11" height="14" viewBox="0 0 11 14"><path d="M0 0H11V10L5.500 14L0 10Z" fill="#b0b0b0"/></svg>
<svg class="a" style="left:1578px;top:721px;" width="15" height="13" viewBox="0 0 15 13"><path d="M5 3H14V9H5Z" fill="#b0b0b0"/><path d="M0.500 8L6 2.500V10.500Z" fill="#232323" stroke="#b0b0b0" stroke-width="1"/><circle cx="6.500" cy="10" r="2.500" fill="#232323" stroke="#b0b0b0" stroke-width="1"/></svg>
<div class="a" style="left:550px;top:690px;width:1px;height:315px;background:#2d8ceb;"></div>
<svg class="a" style="left:544px;top:684px;" width="13" height="13" viewBox="0 0 13 13"><path d="M0.500 0.500H12.500V5L6.500 12.500L0.500 5Z" fill="#2d8ceb"/></svg>
<svg class="a" style="left:547px;top:739px;" width="7" height="11" viewBox="0 0 7 11"><path d="M0 0.5H7M0 10.5H7M4.5 0.5V10.5" stroke="#c8c8c8" stroke-width="1" fill="none"/></svg>
<svg class="a" style="left:547px;top:756px;" width="7" height="11" viewBox="0 0 7 11"><path d="M0 0.5H7M0 10.5H7M4.5 0.5V10.5" stroke="#c8c8c8" stroke-width="1" fill="none"/></svg>
<svg class="a" style="left:547px;top:773px;" width="7" height="11" viewBox="0 0 7 11"><path d="M0 0.5H7M0 10.5H7M4.5 0.5V10.5" stroke="#c8c8c8" stroke-width="1" fill="none"/></svg>
<svg class="a" style="left:547px;top:807px;" width="7" height="11" viewBox="0 0 7 11"><path d="M0 0.5H7M0 10.5H7M4.5 0.5V10.5" stroke="#c8c8c8" stroke-width="1" fill="none"/></svg>
<svg class="a" style="left:547px;top:824px;" width="7" height="11" viewBox="0 0 7 11"><path d="M0 0.5H7M0 10.5H7M4.5 0.5V10.5" stroke="#c8c8c8" stroke-width="1" fill="none"/></svg>
<div class="a" style="left:10px;top:1005px;width:640px;height:1px;background:#080808;"></div>
<div class="a" style="left:1577px;top:1006px;width:1px;height:17px;background:#1a1a1a;"></div>
<div class="a" style="left:14px;top:1007px;width:16px;height:15px;background:#1a1a1a;border:1px solid #303030;border-radius:2px;"></div>
<svg class="a" style="left:17px;top:1009px;" width="11" height="11" viewBox="0 0 11 11"><rect x="0.600" y="0.600" width="7" height="7" rx="1" fill="none" stroke="#2d8ceb" stroke-width="1.200"/><rect x="3.400" y="3.400" width="7" height="7" rx="1" fill="#1a1a1a" stroke="#2d8ceb" stroke-width="1.200"/><rect x="5.800" y="5.800" width="2.400" height="2.400" fill="#2d8ceb"/></svg>
<svg class="a" style="left:36px;top:1008px;" width="12" height="12" viewBox="0 0 12 12"><circle cx="4.500" cy="4.500" r="3.800" fill="none" stroke="#b4b4b4" stroke-width="1.200"/><rect x="4.500" y="4.500" width="6.500" height="6.500" fill="#232323" stroke="#b4b4b4" stroke-width="1.200"/></svg>
<svg class="a" style="left:54px;top:1008px;" width="13" height="12" viewBox="0 0 13 12"><path d="M4 0.500C2.500 0.500 3 5 0.500 6C3 7 2.500 11.500 4 11.500M9 0.500C10.500 0.500 10 5 12.500 6C10 7 10.500 11.500 9 11.500" fill="none" stroke="#b4b4b4" stroke-width="1.300"/><rect x="3.500" y="1" width="6" height="10" fill="#7c7c7c"/></svg>
<svg class="a" style="left:73px;top:1008px;" width="14" height="11" viewBox="0 0 14 11"><circle cx="5" cy="3.500" r="3.300" fill="#b4b4b4"/><path d="M0 11C0 7 10 7 10 11Z" fill="#b4b4b4"/><path d="M10.500 2H13.500M12 2V7" stroke="#b4b4b4" stroke-width="1"/></svg>
<div class="t" style="left:115px;top:1008px;font-size:12px;line-height:12px;color:#b2b2b2;transform:scaleX(0.9087);">Frame Render Time:</div>
<div class="t" style="left:221px;top:1008px;font-size:12px;line-height:12px;color:#3ad8a2;transform:scaleX(0.8822);">8ms</div>
<div class="a" style="left:274px;top:1007px;width:135px;height:16px;border:1px solid #333;border-radius:2px;"></div>
<div class="t" style="left:280px;top:1008px;font-size:12px;line-height:12px;color:#b2b2b2;transform:scaleX(0.9267);">Toggle Switches / Modes</div>
<svg class="a" style="left:548px;top:1011px;" width="10" height="5" viewBox="0 0 10 5"><path d="M0 4.500L3 1.500L4.500 2.800L6.800 0L10 4.500Z" fill="#d0d0d0"/></svg>
<svg class="a" style="left:569px;top:1010px;" width="10" height="10" viewBox="0 0 10 10"><circle cx="5" cy="5" r="4" fill="#1c1c1c" stroke="#8e8e8e" stroke-width="2"/></svg>
<div class="a" style="left:579px;top:1012.5px;width:37px;height:1.5px;background:#3a3a3a;"></div>
<svg class="a" style="left:629px;top:1009px;" width="17" height="7" viewBox="0 0 17 7"><path d="M0 7L5.500 0.500L9 4.500L11.500 1.500L17 7Z" fill="#b4b4b4"/></svg>
<div class="a" style="left:0px;top:916px;width:8px;height:113px;background:#121212;"></div>
<div class="a" style="left:0px;top:1025px;width:1920px;height:4px;background:#121212;"></div>
<div class="a" style="left:1913px;top:917px;width:7px;height:112px;background:#151515;"></div>
<div class="a" style="left:42px;top:1025px;width:1090px;height:4px;background:#12141c;"></div>
<div class="a" style="left:276px;top:83px;width:111px;height:20px;background:#fcfcfc;border-radius:3px;box-shadow:1px 1px 3px rgba(0,0,0,.6);"></div>
<div class="t" style="left:282px;top:87px;font-size:12px;line-height:12px;color:#444;transform:scaleX(0.9767);">Rectangle Tool (Q)</div>
<div class="a" style="left:8px;top:1px;width:1905px;height:1024px;border-radius:8px;border:1px solid rgba(80,80,86,.6);pointer-events:none;"></div>
</body></html>
